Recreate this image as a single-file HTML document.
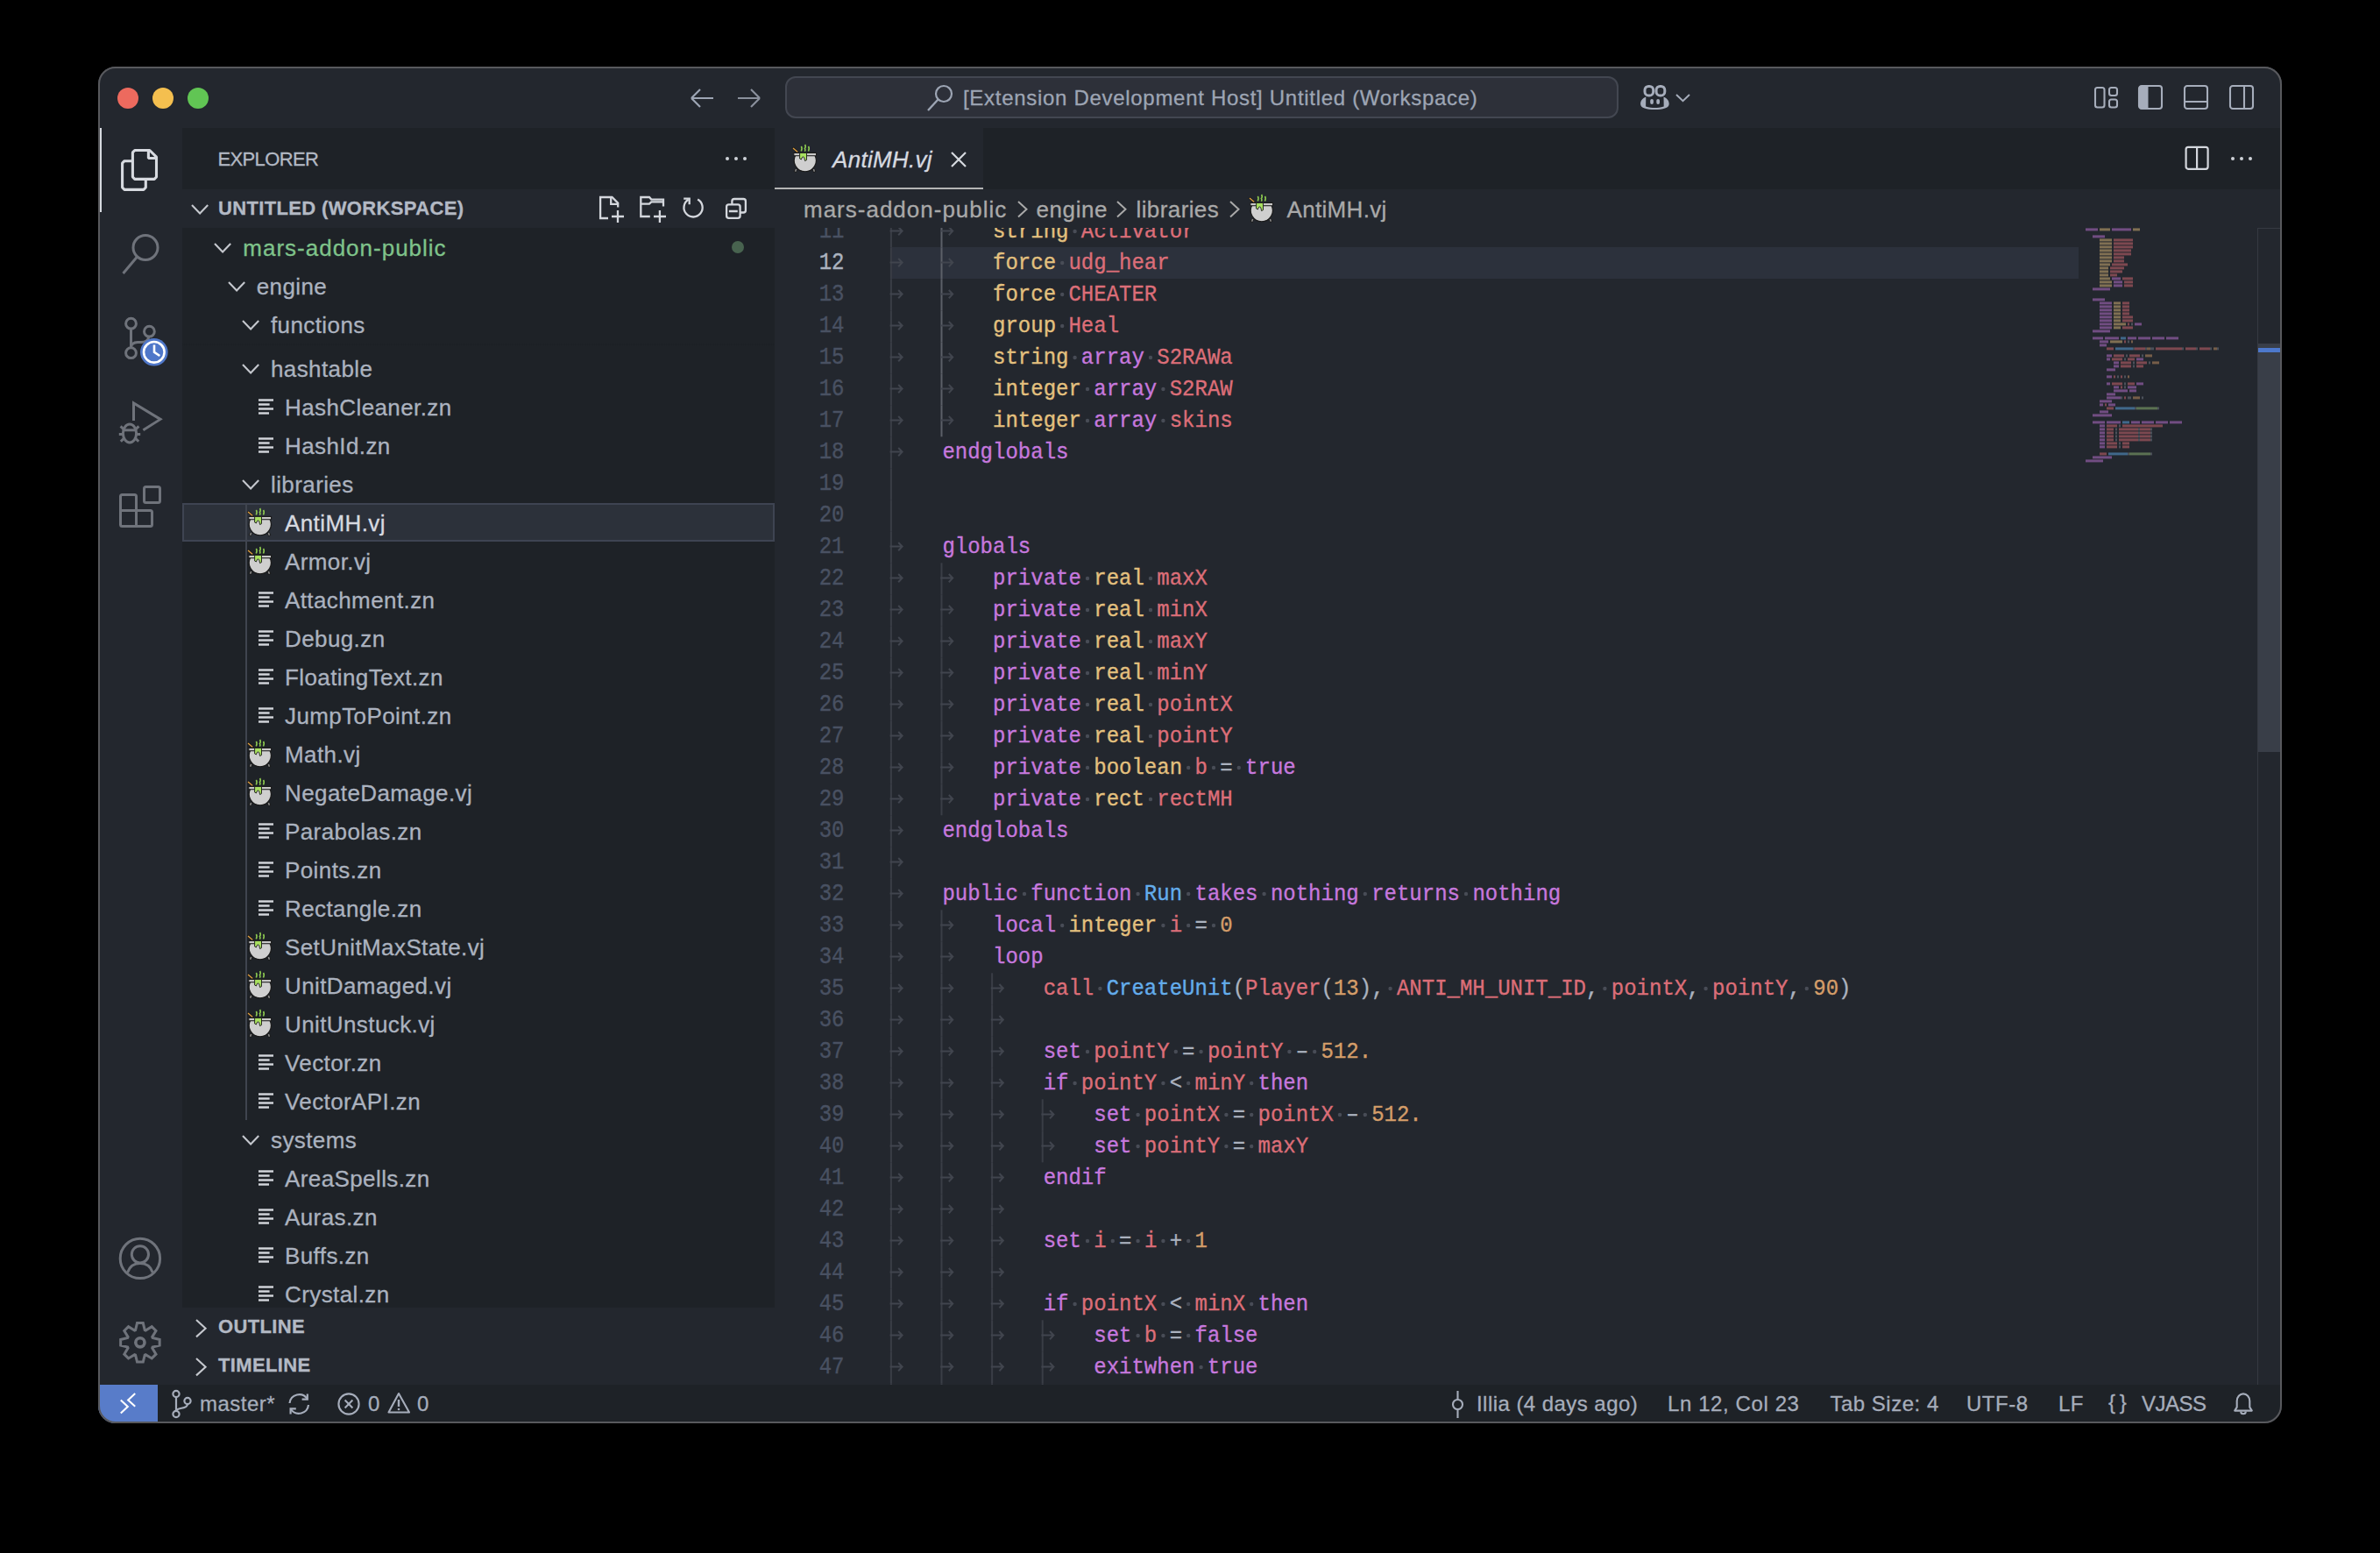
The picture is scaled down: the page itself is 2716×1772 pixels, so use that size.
<!DOCTYPE html><html><head><meta charset="utf-8"><style>
*{margin:0;padding:0;box-sizing:border-box}
html,body{width:2716px;height:1772px;background:#000;overflow:hidden}
body{font-family:"Liberation Sans",sans-serif;color:#abb2bf}
#win{position:absolute;left:112px;top:76px;width:2492px;height:1548px;border-radius:20px;overflow:hidden;background:#23272e}
#winborder{position:absolute;left:112px;top:76px;width:2492px;height:1548px;border-radius:20px;border:2px solid #58595d;pointer-events:none}
.a{position:absolute}
.t{position:absolute;white-space:pre;line-height:1;-webkit-text-stroke:0.3px currentColor}
svg{position:absolute;overflow:visible}
.code{position:absolute;font-family:"Liberation Mono",monospace;font-size:24px;line-height:36px;white-space:pre;-webkit-text-stroke:0.35px currentColor}
.k{color:#c678dd}.y{color:#e3c07e}.r{color:#dc6e78}.b{color:#63adec}.o{color:#d49d69}.p{color:#abb2bf}.g{color:#98c379}
</style></head><body>
<div id="win"><div class="a" style="left:0px;top:0px;width:2492px;height:70px;background:#23272e;"></div><div class="a" style="left:0px;top:70px;width:96px;height:1434px;background:#23272e;"></div><div class="a" style="left:96px;top:70px;width:676px;height:1434px;background:#1e2227;"></div><div class="a" style="left:772px;top:70px;width:1720px;height:1434px;background:#23272e;"></div><div class="a" style="left:772px;top:70px;width:1720px;height:70px;background:#1e2227;"></div><div class="a" style="left:0px;top:1504px;width:2492px;height:44px;background:#1e2227;"></div><div class="a" style="left:22px;top:24px;width:24px;height:24px;border-radius:50%;background:#ed6a5e"></div><div class="a" style="left:62px;top:24px;width:24px;height:24px;border-radius:50%;background:#f4bf4f"></div><div class="a" style="left:102px;top:24px;width:24px;height:24px;border-radius:50%;background:#61c554"></div><svg style="left:674px;top:22px" width="32" height="28" viewBox="0 0 32 28"><path d="M3 14 H28 M3 14 L13 4 M3 14 L13 24" stroke="#9da5b4" stroke-width="2.2" fill="none"/></svg><svg style="left:726px;top:22px" width="32" height="28" viewBox="0 0 32 28"><path d="M29 14 H4 M29 14 L19 4 M29 14 L19 24" stroke="#8a909c" stroke-width="2.2" fill="none"/></svg><div class="a" style="left:784px;top:11px;width:951px;height:48px;border-radius:12px;background:#2d3039;border:2px solid #434751"></div><svg style="left:944px;top:19px" width="34" height="34" viewBox="0 0 34 34"><circle cx="21" cy="12" r="9" stroke="#9da5b4" stroke-width="2.2" fill="none"/><path d="M14.5 18.5 L3 31" stroke="#9da5b4" stroke-width="2.4" fill="none"/></svg><div class="t" style="left:987.00px;top:23.68px;font-size:24px;color:#9da5b4;font-family:'Liberation Sans',sans-serif;letter-spacing:0.7px">[Extension Development Host] Untitled (Workspace)</div><svg style="left:1758px;top:19px" width="40" height="32" viewBox="0 0 40 32"><g fill="none" stroke="#a6adbb" stroke-width="3"><rect x="7" y="3.4" width="9.7" height="10.6" rx="4.3"/><rect x="20.1" y="3.4" width="9.7" height="10.6" rx="4.3"/></g>
<path d="M8.3 15.5 C4 17 2.1 20.5 2.1 23.8 C2.1 28.4 9 30 18.4 30 C27.8 30 34.7 28.4 34.7 23.8 C34.7 20.5 32.8 17 28.5 15.5 L28.7 26.4 C25 27.6 21.5 28.1 18.4 28.1 C15.3 28.1 11.8 27.6 8.1 26.4 Z" fill="#a6adbb"/>
<rect x="13.2" y="17.9" width="3.7" height="6" rx="1.85" fill="#a6adbb"/><rect x="20.3" y="17.9" width="3.7" height="6" rx="1.85" fill="#a6adbb"/></svg><svg style="left:1798px;top:29px" width="20" height="14" viewBox="0 0 20 14"><path d="M3 3 L10.5 10.2 L18 3" stroke="#a6adbb" stroke-width="2" fill="none"/></svg><svg style="left:2276px;top:20px" width="32" height="30" viewBox="0 0 32 30"><g fill="none" stroke="#a6adbb" stroke-width="2.1"><rect x="3" y="4" width="10.5" height="22.5" rx="2.5"/><rect x="19" y="4" width="9" height="9" rx="2.5"/><rect x="19" y="17.5" width="9" height="9" rx="2.5"/></g></svg><svg style="left:2326px;top:19px" width="32" height="32" viewBox="0 0 32 32"><rect x="3" y="3" width="26" height="26" rx="3" fill="none" stroke="#a6adbb" stroke-width="2.1"/><path d="M4 4 H13.5 V28 H4 Z" fill="#a6adbb"/></svg><svg style="left:2378px;top:19px" width="32" height="32" viewBox="0 0 32 32"><g fill="none" stroke="#a6adbb" stroke-width="2.1"><rect x="3" y="3" width="26" height="26" rx="3"/><path d="M3 21 H29"/></g></svg><svg style="left:2430px;top:19px" width="32" height="32" viewBox="0 0 32 32"><g fill="none" stroke="#a6adbb" stroke-width="2.1"><rect x="3" y="3" width="26" height="26" rx="3"/><path d="M19 3 V29"/></g></svg><div class="a" style="left:0px;top:70px;width:4px;height:96px;background:#d7dae0;"></div><svg style="left:18px;top:84px" width="60" height="64" viewBox="0 0 60 64"><g fill="none" stroke="#d7dae0" stroke-width="3.1" stroke-linejoin="bevel">
<path d="M21.4 23.7 H12 L9.6 26.1 V54 L12 56.4 H33.9 L36.3 54 V44.4"/>
<path d="M23.8 11.5 L21.4 13.9 V42 L23.8 44.4 H46.1 L48.5 42 V19.2 L40.8 11.5 Z"/>
<path d="M39.4 11.5 V20.5 H48.5"/></g></svg><svg style="left:18px;top:182px" width="60" height="64" viewBox="0 0 60 64"><g fill="none" stroke="#6f737b" stroke-width="3"><circle cx="36" cy="24.5" r="14"/><path d="M26.5 35 L10.5 54"/></g></svg><svg style="left:18px;top:274px" width="60" height="70" viewBox="0 0 60 70"><g fill="none" stroke="#6f737b" stroke-width="3">
<circle cx="19.5" cy="19.2" r="5.9"/><circle cx="19.5" cy="52.7" r="5.9"/><circle cx="40.4" cy="28.2" r="5.9"/>
<path d="M19.5 25 V46.8"/><path d="M40 34 Q39 40.5 31 40.6 H27 Q20 41 19.5 46"/></g>
<circle cx="45.8" cy="51.8" r="15.8" fill="#4f77c9"/><circle cx="45.8" cy="51.8" r="11.8" fill="none" stroke="#fff" stroke-width="2.6"/>
<path d="M46 43.5 V51.8 L52.3 56" fill="none" stroke="#fff" stroke-width="2.6"/></svg><svg style="left:18px;top:374px" width="60" height="70" viewBox="0 0 60 70"><g fill="none" stroke="#6f737b" stroke-width="3">
<path d="M22.5 30 V10 L53 28.4 L33.4 40.7"/>
<ellipse cx="18" cy="44.5" rx="7.6" ry="10.5"/><path d="M11 40.8 H25"/>
<path d="M7.6 36.4 L11.6 40.3 M28.4 36.4 L24.4 40.3 M5.8 45.5 H10.8 M25.2 45.5 H30.2 M7.8 53.8 L11.8 49.8 M28.2 53.8 L24.2 49.8"/></g></svg><svg style="left:18px;top:469px" width="60" height="70" viewBox="0 0 60 70"><g fill="none" stroke="#6f737b" stroke-width="3" stroke-linejoin="round">
<path d="M7.5 21.5 Q7.5 19.5 9.5 19.5 H23.5 Q25.5 19.5 25.5 21.5 V37.5 H41.5 Q43.5 37.5 43.5 39.5 V53.5 Q43.5 55.5 41.5 55.5 H9.5 Q7.5 55.5 7.5 53.5 Z"/>
<path d="M7.5 37.5 H25.5 V55.5"/>
<path d="M36.5 10.6 H50.5 Q52.5 10.6 52.5 12.6 V26.4 Q52.5 28.4 50.5 28.4 H36.5 Q34.5 28.4 34.5 26.4 V12.6 Q34.5 10.6 36.5 10.6 Z"/></g></svg><svg style="left:18px;top:1329px" width="60" height="64" viewBox="0 0 60 64"><g fill="none" stroke="#6f737b" stroke-width="3"><circle cx="29.9" cy="30.9" r="22.7"/><circle cx="29.9" cy="26.3" r="9.6"/>
<path d="M15.5 47 Q19 36.5 29.9 36.5 Q40.8 36.5 44.3 47"/></g></svg><svg style="left:18px;top:1426px" width="60" height="60" viewBox="0 0 60 60"><polygon points="24.58,15.56 26.54,7.55 33.26,7.55 35.22,15.56 36.20,15.97 43.25,11.69 48.01,16.45 43.73,23.50 44.14,24.48 52.15,26.44 52.15,33.16 44.14,35.12 43.73,36.10 48.01,43.15 43.25,47.91 36.20,43.63 35.22,44.04 33.26,52.05 26.54,52.05 24.58,44.04 23.60,43.63 16.55,47.91 11.79,43.15 16.07,36.10 15.66,35.12 7.65,33.16 7.65,26.44 15.66,24.48 16.07,23.50 11.79,16.45 16.55,11.69 23.60,15.97" fill="none" stroke="#6f737b" stroke-width="3" stroke-linejoin="miter"/><circle cx="29.9" cy="29.8" r="5.1" fill="none" stroke="#6f737b" stroke-width="3.6"/></svg><div class="t" style="left:136.40px;top:95.38px;font-size:22px;color:#b3b9c4;font-family:'Liberation Sans',sans-serif;letter-spacing:-0.6px">EXPLORER</div><div class="a" style="left:715.6px;top:102.69999999999999px;width:4.6px;height:4.6px;border-radius:50%;background:#cfd2d8"></div><div class="a" style="left:725.6px;top:102.69999999999999px;width:4.6px;height:4.6px;border-radius:50%;background:#cfd2d8"></div><div class="a" style="left:735.6px;top:102.69999999999999px;width:4.6px;height:4.6px;border-radius:50%;background:#cfd2d8"></div><div class="a" style="left:96px;top:140px;width:676px;height:44px;background:#23272e;"></div><svg style="left:104.9px;top:155.8px" width="22.2" height="13.4" viewBox="0 0 22.2 13.4"><path d="M2 2 L11.10 11.40 L20.20 2" fill="none" stroke="#c5c8ce" stroke-width="2.1"/></svg><div class="t" style="left:137.00px;top:151.38px;font-size:22px;color:#b3b9c4;font-family:'Liberation Sans',sans-serif;font-weight:bold;letter-spacing:0.35px">UNTITLED (WORKSPACE)</div><svg style="left:558px;top:139px" width="200" height="45" viewBox="0 0 200 45"><g fill="none" stroke="#d4d7dd" stroke-width="2.3">
<path d="M24 34 H15.1 V10 H28.5 L35.2 16.7 V21.6"/><path d="M27.2 10 V17.8 H35.2"/><path d="M28 32 H42 M35 25 V39"/>
<path d="M71.8 32 H61.3 V10 H71 L73.3 12.6 H87 V20.6"/><path d="M61.3 17.6 H71 L73.3 15.4 H87"/><path d="M76 32 H90 M82.9 25 V39"/>
<path d="M126.2 12.6 A10.6 10.6 0 1 1 115.6 12.8"/><path d="M110.2 11.7 H116.7 V18.3"/>
<rect x="165.4" y="12" width="15.5" height="15.5" rx="2.6"/><rect x="159.1" y="18.3" width="15.5" height="15.5" rx="2.6" fill="#23272e"/><path d="M161.9 26 H171.8"/>
</g></svg><div class="a" style="left:96px;top:497.70000000000005px;width:676px;height:44px;background:#2c313a;border:2px solid #3e4452"></div><div class="a" style="left:167.5px;top:497.70000000000005px;width:2.5px;height:704.0px;background:#40454f;"></div><svg style="left:163.0px;top:337.8px" width="22.2" height="13.4" viewBox="0 0 22.2 13.4"><path d="M2 2 L11.10 11.40 L20.20 2" fill="none" stroke="#c5c8ce" stroke-width="2.1"/></svg><div class="t" style="left:197.00px;top:331.89px;font-size:26px;color:#abb2bf;font-family:'Liberation Sans',sans-serif;letter-spacing:0.4px">hashtable</div><svg style="left:183px;top:365.7px" width="18" height="44" viewBox="0 0 18 44"><rect x="0" y="13.3" width="17" height="2.4" fill="#d4d7dd"/><rect x="0" y="18.3" width="12.6" height="2.4" fill="#d4d7dd"/><rect x="0" y="23.3" width="17" height="2.4" fill="#d4d7dd"/><rect x="0" y="28.3" width="12" height="2.4" fill="#d4d7dd"/></svg><div class="t" style="left:213.00px;top:375.89px;font-size:26px;color:#abb2bf;font-family:'Liberation Sans',sans-serif;letter-spacing:0.4px">HashCleaner.zn</div><svg style="left:183px;top:409.7px" width="18" height="44" viewBox="0 0 18 44"><rect x="0" y="13.3" width="17" height="2.4" fill="#d4d7dd"/><rect x="0" y="18.3" width="12.6" height="2.4" fill="#d4d7dd"/><rect x="0" y="23.3" width="17" height="2.4" fill="#d4d7dd"/><rect x="0" y="28.3" width="12" height="2.4" fill="#d4d7dd"/></svg><div class="t" style="left:213.00px;top:419.89px;font-size:26px;color:#abb2bf;font-family:'Liberation Sans',sans-serif;letter-spacing:0.4px">HashId.zn</div><svg style="left:163.0px;top:469.80000000000007px" width="22.2" height="13.4" viewBox="0 0 22.2 13.4"><path d="M2 2 L11.10 11.40 L20.20 2" fill="none" stroke="#c5c8ce" stroke-width="2.1"/></svg><div class="t" style="left:197.00px;top:463.89px;font-size:26px;color:#abb2bf;font-family:'Liberation Sans',sans-serif;letter-spacing:0.4px">libraries</div><svg style="left:166px;top:497.70000000000005px" width="40" height="44" viewBox="0 0 40 44">
<path d="M4.6 9.6 L10.8 15" stroke="#1b1b1b" stroke-width="2.6"/><path d="M5 10 L10.3 14.5" stroke="#e0a040" stroke-width="1.4"/>
<path d="M8.6 34 L7.2 37.4 M28.4 34 L29.8 37.4" stroke="#1b1b1b" stroke-width="3.2"/>
<path d="M8.6 34 L7.6 36.8 M28.4 34 L29.4 36.8" stroke="#8a8a8a" stroke-width="1.6"/>
<path d="M7.7 18.2 H29.9 A12.6 12.6 0 1 1 7.7 18.2 Z" fill="#cfcfcf" stroke="#1b1b1b" stroke-width="1.2"/>
<rect x="5.8" y="15.4" width="25.8" height="3.4" rx="0.8" fill="#c8c8c8" stroke="#1b1b1b" stroke-width="1.1"/>
<path d="M12.6 15.4 H20.5 V23.6 L18.6 24.6 L17.8 21 C17.2 19.6 15.6 19.6 15.2 21 L14.4 23 L12.6 22 Z" fill="#a8e060" stroke="#1b1b1b" stroke-width="0.9"/>
<g stroke="#8cc850" stroke-width="1.6" fill="none"><path d="M14.3 8 Q15.8 10 14.3 13.5"/><path d="M18.6 6 Q20 8.5 18.4 10.5 Q19.6 12 18.4 13.8"/><path d="M22.5 8 Q24 10 22.5 13.5"/></g>
</svg><div class="t" style="left:213.00px;top:507.89px;font-size:26px;color:#d7dae0;font-family:'Liberation Sans',sans-serif;letter-spacing:0.4px">AntiMH.vj</div><svg style="left:166px;top:541.7px" width="40" height="44" viewBox="0 0 40 44">
<path d="M4.6 9.6 L10.8 15" stroke="#1b1b1b" stroke-width="2.6"/><path d="M5 10 L10.3 14.5" stroke="#e0a040" stroke-width="1.4"/>
<path d="M8.6 34 L7.2 37.4 M28.4 34 L29.8 37.4" stroke="#1b1b1b" stroke-width="3.2"/>
<path d="M8.6 34 L7.6 36.8 M28.4 34 L29.4 36.8" stroke="#8a8a8a" stroke-width="1.6"/>
<path d="M7.7 18.2 H29.9 A12.6 12.6 0 1 1 7.7 18.2 Z" fill="#cfcfcf" stroke="#1b1b1b" stroke-width="1.2"/>
<rect x="5.8" y="15.4" width="25.8" height="3.4" rx="0.8" fill="#c8c8c8" stroke="#1b1b1b" stroke-width="1.1"/>
<path d="M12.6 15.4 H20.5 V23.6 L18.6 24.6 L17.8 21 C17.2 19.6 15.6 19.6 15.2 21 L14.4 23 L12.6 22 Z" fill="#a8e060" stroke="#1b1b1b" stroke-width="0.9"/>
<g stroke="#8cc850" stroke-width="1.6" fill="none"><path d="M14.3 8 Q15.8 10 14.3 13.5"/><path d="M18.6 6 Q20 8.5 18.4 10.5 Q19.6 12 18.4 13.8"/><path d="M22.5 8 Q24 10 22.5 13.5"/></g>
</svg><div class="t" style="left:213.00px;top:551.89px;font-size:26px;color:#abb2bf;font-family:'Liberation Sans',sans-serif;letter-spacing:0.4px">Armor.vj</div><svg style="left:183px;top:585.7px" width="18" height="44" viewBox="0 0 18 44"><rect x="0" y="13.3" width="17" height="2.4" fill="#d4d7dd"/><rect x="0" y="18.3" width="12.6" height="2.4" fill="#d4d7dd"/><rect x="0" y="23.3" width="17" height="2.4" fill="#d4d7dd"/><rect x="0" y="28.3" width="12" height="2.4" fill="#d4d7dd"/></svg><div class="t" style="left:213.00px;top:595.89px;font-size:26px;color:#abb2bf;font-family:'Liberation Sans',sans-serif;letter-spacing:0.4px">Attachment.zn</div><svg style="left:183px;top:629.7px" width="18" height="44" viewBox="0 0 18 44"><rect x="0" y="13.3" width="17" height="2.4" fill="#d4d7dd"/><rect x="0" y="18.3" width="12.6" height="2.4" fill="#d4d7dd"/><rect x="0" y="23.3" width="17" height="2.4" fill="#d4d7dd"/><rect x="0" y="28.3" width="12" height="2.4" fill="#d4d7dd"/></svg><div class="t" style="left:213.00px;top:639.89px;font-size:26px;color:#abb2bf;font-family:'Liberation Sans',sans-serif;letter-spacing:0.4px">Debug.zn</div><svg style="left:183px;top:673.7px" width="18" height="44" viewBox="0 0 18 44"><rect x="0" y="13.3" width="17" height="2.4" fill="#d4d7dd"/><rect x="0" y="18.3" width="12.6" height="2.4" fill="#d4d7dd"/><rect x="0" y="23.3" width="17" height="2.4" fill="#d4d7dd"/><rect x="0" y="28.3" width="12" height="2.4" fill="#d4d7dd"/></svg><div class="t" style="left:213.00px;top:683.89px;font-size:26px;color:#abb2bf;font-family:'Liberation Sans',sans-serif;letter-spacing:0.4px">FloatingText.zn</div><svg style="left:183px;top:717.7px" width="18" height="44" viewBox="0 0 18 44"><rect x="0" y="13.3" width="17" height="2.4" fill="#d4d7dd"/><rect x="0" y="18.3" width="12.6" height="2.4" fill="#d4d7dd"/><rect x="0" y="23.3" width="17" height="2.4" fill="#d4d7dd"/><rect x="0" y="28.3" width="12" height="2.4" fill="#d4d7dd"/></svg><div class="t" style="left:213.00px;top:727.89px;font-size:26px;color:#abb2bf;font-family:'Liberation Sans',sans-serif;letter-spacing:0.4px">JumpToPoint.zn</div><svg style="left:166px;top:761.7px" width="40" height="44" viewBox="0 0 40 44">
<path d="M4.6 9.6 L10.8 15" stroke="#1b1b1b" stroke-width="2.6"/><path d="M5 10 L10.3 14.5" stroke="#e0a040" stroke-width="1.4"/>
<path d="M8.6 34 L7.2 37.4 M28.4 34 L29.8 37.4" stroke="#1b1b1b" stroke-width="3.2"/>
<path d="M8.6 34 L7.6 36.8 M28.4 34 L29.4 36.8" stroke="#8a8a8a" stroke-width="1.6"/>
<path d="M7.7 18.2 H29.9 A12.6 12.6 0 1 1 7.7 18.2 Z" fill="#cfcfcf" stroke="#1b1b1b" stroke-width="1.2"/>
<rect x="5.8" y="15.4" width="25.8" height="3.4" rx="0.8" fill="#c8c8c8" stroke="#1b1b1b" stroke-width="1.1"/>
<path d="M12.6 15.4 H20.5 V23.6 L18.6 24.6 L17.8 21 C17.2 19.6 15.6 19.6 15.2 21 L14.4 23 L12.6 22 Z" fill="#a8e060" stroke="#1b1b1b" stroke-width="0.9"/>
<g stroke="#8cc850" stroke-width="1.6" fill="none"><path d="M14.3 8 Q15.8 10 14.3 13.5"/><path d="M18.6 6 Q20 8.5 18.4 10.5 Q19.6 12 18.4 13.8"/><path d="M22.5 8 Q24 10 22.5 13.5"/></g>
</svg><div class="t" style="left:213.00px;top:771.89px;font-size:26px;color:#abb2bf;font-family:'Liberation Sans',sans-serif;letter-spacing:0.4px">Math.vj</div><svg style="left:166px;top:805.7px" width="40" height="44" viewBox="0 0 40 44">
<path d="M4.6 9.6 L10.8 15" stroke="#1b1b1b" stroke-width="2.6"/><path d="M5 10 L10.3 14.5" stroke="#e0a040" stroke-width="1.4"/>
<path d="M8.6 34 L7.2 37.4 M28.4 34 L29.8 37.4" stroke="#1b1b1b" stroke-width="3.2"/>
<path d="M8.6 34 L7.6 36.8 M28.4 34 L29.4 36.8" stroke="#8a8a8a" stroke-width="1.6"/>
<path d="M7.7 18.2 H29.9 A12.6 12.6 0 1 1 7.7 18.2 Z" fill="#cfcfcf" stroke="#1b1b1b" stroke-width="1.2"/>
<rect x="5.8" y="15.4" width="25.8" height="3.4" rx="0.8" fill="#c8c8c8" stroke="#1b1b1b" stroke-width="1.1"/>
<path d="M12.6 15.4 H20.5 V23.6 L18.6 24.6 L17.8 21 C17.2 19.6 15.6 19.6 15.2 21 L14.4 23 L12.6 22 Z" fill="#a8e060" stroke="#1b1b1b" stroke-width="0.9"/>
<g stroke="#8cc850" stroke-width="1.6" fill="none"><path d="M14.3 8 Q15.8 10 14.3 13.5"/><path d="M18.6 6 Q20 8.5 18.4 10.5 Q19.6 12 18.4 13.8"/><path d="M22.5 8 Q24 10 22.5 13.5"/></g>
</svg><div class="t" style="left:213.00px;top:815.89px;font-size:26px;color:#abb2bf;font-family:'Liberation Sans',sans-serif;letter-spacing:0.4px">NegateDamage.vj</div><svg style="left:183px;top:849.7px" width="18" height="44" viewBox="0 0 18 44"><rect x="0" y="13.3" width="17" height="2.4" fill="#d4d7dd"/><rect x="0" y="18.3" width="12.6" height="2.4" fill="#d4d7dd"/><rect x="0" y="23.3" width="17" height="2.4" fill="#d4d7dd"/><rect x="0" y="28.3" width="12" height="2.4" fill="#d4d7dd"/></svg><div class="t" style="left:213.00px;top:859.89px;font-size:26px;color:#abb2bf;font-family:'Liberation Sans',sans-serif;letter-spacing:0.4px">Parabolas.zn</div><svg style="left:183px;top:893.7px" width="18" height="44" viewBox="0 0 18 44"><rect x="0" y="13.3" width="17" height="2.4" fill="#d4d7dd"/><rect x="0" y="18.3" width="12.6" height="2.4" fill="#d4d7dd"/><rect x="0" y="23.3" width="17" height="2.4" fill="#d4d7dd"/><rect x="0" y="28.3" width="12" height="2.4" fill="#d4d7dd"/></svg><div class="t" style="left:213.00px;top:903.89px;font-size:26px;color:#abb2bf;font-family:'Liberation Sans',sans-serif;letter-spacing:0.4px">Points.zn</div><svg style="left:183px;top:937.7px" width="18" height="44" viewBox="0 0 18 44"><rect x="0" y="13.3" width="17" height="2.4" fill="#d4d7dd"/><rect x="0" y="18.3" width="12.6" height="2.4" fill="#d4d7dd"/><rect x="0" y="23.3" width="17" height="2.4" fill="#d4d7dd"/><rect x="0" y="28.3" width="12" height="2.4" fill="#d4d7dd"/></svg><div class="t" style="left:213.00px;top:947.89px;font-size:26px;color:#abb2bf;font-family:'Liberation Sans',sans-serif;letter-spacing:0.4px">Rectangle.zn</div><svg style="left:166px;top:981.7px" width="40" height="44" viewBox="0 0 40 44">
<path d="M4.6 9.6 L10.8 15" stroke="#1b1b1b" stroke-width="2.6"/><path d="M5 10 L10.3 14.5" stroke="#e0a040" stroke-width="1.4"/>
<path d="M8.6 34 L7.2 37.4 M28.4 34 L29.8 37.4" stroke="#1b1b1b" stroke-width="3.2"/>
<path d="M8.6 34 L7.6 36.8 M28.4 34 L29.4 36.8" stroke="#8a8a8a" stroke-width="1.6"/>
<path d="M7.7 18.2 H29.9 A12.6 12.6 0 1 1 7.7 18.2 Z" fill="#cfcfcf" stroke="#1b1b1b" stroke-width="1.2"/>
<rect x="5.8" y="15.4" width="25.8" height="3.4" rx="0.8" fill="#c8c8c8" stroke="#1b1b1b" stroke-width="1.1"/>
<path d="M12.6 15.4 H20.5 V23.6 L18.6 24.6 L17.8 21 C17.2 19.6 15.6 19.6 15.2 21 L14.4 23 L12.6 22 Z" fill="#a8e060" stroke="#1b1b1b" stroke-width="0.9"/>
<g stroke="#8cc850" stroke-width="1.6" fill="none"><path d="M14.3 8 Q15.8 10 14.3 13.5"/><path d="M18.6 6 Q20 8.5 18.4 10.5 Q19.6 12 18.4 13.8"/><path d="M22.5 8 Q24 10 22.5 13.5"/></g>
</svg><div class="t" style="left:213.00px;top:991.89px;font-size:26px;color:#abb2bf;font-family:'Liberation Sans',sans-serif;letter-spacing:0.4px">SetUnitMaxState.vj</div><svg style="left:166px;top:1025.7px" width="40" height="44" viewBox="0 0 40 44">
<path d="M4.6 9.6 L10.8 15" stroke="#1b1b1b" stroke-width="2.6"/><path d="M5 10 L10.3 14.5" stroke="#e0a040" stroke-width="1.4"/>
<path d="M8.6 34 L7.2 37.4 M28.4 34 L29.8 37.4" stroke="#1b1b1b" stroke-width="3.2"/>
<path d="M8.6 34 L7.6 36.8 M28.4 34 L29.4 36.8" stroke="#8a8a8a" stroke-width="1.6"/>
<path d="M7.7 18.2 H29.9 A12.6 12.6 0 1 1 7.7 18.2 Z" fill="#cfcfcf" stroke="#1b1b1b" stroke-width="1.2"/>
<rect x="5.8" y="15.4" width="25.8" height="3.4" rx="0.8" fill="#c8c8c8" stroke="#1b1b1b" stroke-width="1.1"/>
<path d="M12.6 15.4 H20.5 V23.6 L18.6 24.6 L17.8 21 C17.2 19.6 15.6 19.6 15.2 21 L14.4 23 L12.6 22 Z" fill="#a8e060" stroke="#1b1b1b" stroke-width="0.9"/>
<g stroke="#8cc850" stroke-width="1.6" fill="none"><path d="M14.3 8 Q15.8 10 14.3 13.5"/><path d="M18.6 6 Q20 8.5 18.4 10.5 Q19.6 12 18.4 13.8"/><path d="M22.5 8 Q24 10 22.5 13.5"/></g>
</svg><div class="t" style="left:213.00px;top:1035.89px;font-size:26px;color:#abb2bf;font-family:'Liberation Sans',sans-serif;letter-spacing:0.4px">UnitDamaged.vj</div><svg style="left:166px;top:1069.7px" width="40" height="44" viewBox="0 0 40 44">
<path d="M4.6 9.6 L10.8 15" stroke="#1b1b1b" stroke-width="2.6"/><path d="M5 10 L10.3 14.5" stroke="#e0a040" stroke-width="1.4"/>
<path d="M8.6 34 L7.2 37.4 M28.4 34 L29.8 37.4" stroke="#1b1b1b" stroke-width="3.2"/>
<path d="M8.6 34 L7.6 36.8 M28.4 34 L29.4 36.8" stroke="#8a8a8a" stroke-width="1.6"/>
<path d="M7.7 18.2 H29.9 A12.6 12.6 0 1 1 7.7 18.2 Z" fill="#cfcfcf" stroke="#1b1b1b" stroke-width="1.2"/>
<rect x="5.8" y="15.4" width="25.8" height="3.4" rx="0.8" fill="#c8c8c8" stroke="#1b1b1b" stroke-width="1.1"/>
<path d="M12.6 15.4 H20.5 V23.6 L18.6 24.6 L17.8 21 C17.2 19.6 15.6 19.6 15.2 21 L14.4 23 L12.6 22 Z" fill="#a8e060" stroke="#1b1b1b" stroke-width="0.9"/>
<g stroke="#8cc850" stroke-width="1.6" fill="none"><path d="M14.3 8 Q15.8 10 14.3 13.5"/><path d="M18.6 6 Q20 8.5 18.4 10.5 Q19.6 12 18.4 13.8"/><path d="M22.5 8 Q24 10 22.5 13.5"/></g>
</svg><div class="t" style="left:213.00px;top:1079.89px;font-size:26px;color:#abb2bf;font-family:'Liberation Sans',sans-serif;letter-spacing:0.4px">UnitUnstuck.vj</div><svg style="left:183px;top:1113.7px" width="18" height="44" viewBox="0 0 18 44"><rect x="0" y="13.3" width="17" height="2.4" fill="#d4d7dd"/><rect x="0" y="18.3" width="12.6" height="2.4" fill="#d4d7dd"/><rect x="0" y="23.3" width="17" height="2.4" fill="#d4d7dd"/><rect x="0" y="28.3" width="12" height="2.4" fill="#d4d7dd"/></svg><div class="t" style="left:213.00px;top:1123.89px;font-size:26px;color:#abb2bf;font-family:'Liberation Sans',sans-serif;letter-spacing:0.4px">Vector.zn</div><svg style="left:183px;top:1157.7px" width="18" height="44" viewBox="0 0 18 44"><rect x="0" y="13.3" width="17" height="2.4" fill="#d4d7dd"/><rect x="0" y="18.3" width="12.6" height="2.4" fill="#d4d7dd"/><rect x="0" y="23.3" width="17" height="2.4" fill="#d4d7dd"/><rect x="0" y="28.3" width="12" height="2.4" fill="#d4d7dd"/></svg><div class="t" style="left:213.00px;top:1167.89px;font-size:26px;color:#abb2bf;font-family:'Liberation Sans',sans-serif;letter-spacing:0.4px">VectorAPI.zn</div><svg style="left:163.0px;top:1217.8px" width="22.2" height="13.4" viewBox="0 0 22.2 13.4"><path d="M2 2 L11.10 11.40 L20.20 2" fill="none" stroke="#c5c8ce" stroke-width="2.1"/></svg><div class="t" style="left:197.00px;top:1211.89px;font-size:26px;color:#abb2bf;font-family:'Liberation Sans',sans-serif;letter-spacing:0.4px">systems</div><svg style="left:183px;top:1245.7px" width="18" height="44" viewBox="0 0 18 44"><rect x="0" y="13.3" width="17" height="2.4" fill="#d4d7dd"/><rect x="0" y="18.3" width="12.6" height="2.4" fill="#d4d7dd"/><rect x="0" y="23.3" width="17" height="2.4" fill="#d4d7dd"/><rect x="0" y="28.3" width="12" height="2.4" fill="#d4d7dd"/></svg><div class="t" style="left:213.00px;top:1255.89px;font-size:26px;color:#abb2bf;font-family:'Liberation Sans',sans-serif;letter-spacing:0.4px">AreaSpells.zn</div><svg style="left:183px;top:1289.7px" width="18" height="44" viewBox="0 0 18 44"><rect x="0" y="13.3" width="17" height="2.4" fill="#d4d7dd"/><rect x="0" y="18.3" width="12.6" height="2.4" fill="#d4d7dd"/><rect x="0" y="23.3" width="17" height="2.4" fill="#d4d7dd"/><rect x="0" y="28.3" width="12" height="2.4" fill="#d4d7dd"/></svg><div class="t" style="left:213.00px;top:1299.89px;font-size:26px;color:#abb2bf;font-family:'Liberation Sans',sans-serif;letter-spacing:0.4px">Auras.zn</div><svg style="left:183px;top:1333.7px" width="18" height="44" viewBox="0 0 18 44"><rect x="0" y="13.3" width="17" height="2.4" fill="#d4d7dd"/><rect x="0" y="18.3" width="12.6" height="2.4" fill="#d4d7dd"/><rect x="0" y="23.3" width="17" height="2.4" fill="#d4d7dd"/><rect x="0" y="28.3" width="12" height="2.4" fill="#d4d7dd"/></svg><div class="t" style="left:213.00px;top:1343.89px;font-size:26px;color:#abb2bf;font-family:'Liberation Sans',sans-serif;letter-spacing:0.4px">Buffs.zn</div><svg style="left:183px;top:1377.7px" width="18" height="44" viewBox="0 0 18 44"><rect x="0" y="13.3" width="17" height="2.4" fill="#d4d7dd"/><rect x="0" y="18.3" width="12.6" height="2.4" fill="#d4d7dd"/><rect x="0" y="23.3" width="17" height="2.4" fill="#d4d7dd"/><rect x="0" y="28.3" width="12" height="2.4" fill="#d4d7dd"/></svg><div class="t" style="left:213.00px;top:1387.89px;font-size:26px;color:#abb2bf;font-family:'Liberation Sans',sans-serif;letter-spacing:0.4px">Crystal.zn</div><div class="a" style="left:96px;top:184px;width:676px;height:132px;background:#1e2227;"></div><div class="a" style="left:96px;top:316px;width:676px;height:4px;background:linear-gradient(#1c2025,#1e2227);"></div><svg style="left:131.0px;top:200.10000000000002px" width="22.2" height="13.4" viewBox="0 0 22.2 13.4"><path d="M2 2 L11.10 11.40 L20.20 2" fill="none" stroke="#c5c8ce" stroke-width="2.1"/></svg><div class="t" style="left:165.30px;top:194.19px;font-size:26px;color:#7fc38a;font-family:'Liberation Sans',sans-serif;letter-spacing:1.0px">mars-addon-public</div><svg style="left:147.0px;top:244.10000000000002px" width="22.2" height="13.4" viewBox="0 0 22.2 13.4"><path d="M2 2 L11.10 11.40 L20.20 2" fill="none" stroke="#c5c8ce" stroke-width="2.1"/></svg><div class="t" style="left:180.70px;top:238.19px;font-size:26px;color:#abb2bf;font-family:'Liberation Sans',sans-serif;letter-spacing:0.4px">engine</div><svg style="left:163.0px;top:288.1px" width="22.2" height="13.4" viewBox="0 0 22.2 13.4"><path d="M2 2 L11.10 11.40 L20.20 2" fill="none" stroke="#c5c8ce" stroke-width="2.1"/></svg><div class="t" style="left:197.00px;top:282.19px;font-size:26px;color:#abb2bf;font-family:'Liberation Sans',sans-serif;letter-spacing:0.4px">functions</div><div class="a" style="left:722.9px;top:198.89999999999998px;width:14px;height:14px;border-radius:50%;background:#48634f"></div><div class="a" style="left:96px;top:1416px;width:676px;height:88px;background:#23272e;"></div><svg style="left:110.19999999999999px;top:1427.5px" width="14.6" height="23.4" viewBox="0 0 14.6 23.4"><path d="M2 2 L12.60 11.70 L2 21.40" fill="none" stroke="#c5c8ce" stroke-width="2.1"/></svg><div class="t" style="left:137.00px;top:1427.38px;font-size:22px;color:#b3b9c4;font-family:'Liberation Sans',sans-serif;font-weight:bold;letter-spacing:0.35px">OUTLINE</div><svg style="left:110.19999999999999px;top:1471.5px" width="14.6" height="23.4" viewBox="0 0 14.6 23.4"><path d="M2 2 L12.60 11.70 L2 21.40" fill="none" stroke="#c5c8ce" stroke-width="2.1"/></svg><div class="t" style="left:137.00px;top:1471.38px;font-size:22px;color:#b3b9c4;font-family:'Liberation Sans',sans-serif;font-weight:bold;letter-spacing:0.35px">TIMELINE</div><div class="a" style="left:772px;top:70px;width:238px;height:70px;background:#23272e;"></div><div class="a" style="left:772px;top:138px;width:238px;height:2px;background:#b4b4b4;"></div><svg style="left:788px;top:83px" width="40" height="44" viewBox="0 0 40 44">
<path d="M4.6 9.6 L10.8 15" stroke="#1b1b1b" stroke-width="2.6"/><path d="M5 10 L10.3 14.5" stroke="#e0a040" stroke-width="1.4"/>
<path d="M8.6 34 L7.2 37.4 M28.4 34 L29.8 37.4" stroke="#1b1b1b" stroke-width="3.2"/>
<path d="M8.6 34 L7.6 36.8 M28.4 34 L29.4 36.8" stroke="#8a8a8a" stroke-width="1.6"/>
<path d="M7.7 18.2 H29.9 A12.6 12.6 0 1 1 7.7 18.2 Z" fill="#cfcfcf" stroke="#1b1b1b" stroke-width="1.2"/>
<rect x="5.8" y="15.4" width="25.8" height="3.4" rx="0.8" fill="#c8c8c8" stroke="#1b1b1b" stroke-width="1.1"/>
<path d="M12.6 15.4 H20.5 V23.6 L18.6 24.6 L17.8 21 C17.2 19.6 15.6 19.6 15.2 21 L14.4 23 L12.6 22 Z" fill="#a8e060" stroke="#1b1b1b" stroke-width="0.9"/>
<g stroke="#8cc850" stroke-width="1.6" fill="none"><path d="M14.3 8 Q15.8 10 14.3 13.5"/><path d="M18.6 6 Q20 8.5 18.4 10.5 Q19.6 12 18.4 13.8"/><path d="M22.5 8 Q24 10 22.5 13.5"/></g>
</svg><div class="t" style="left:838.00px;top:92.69px;font-size:26px;color:#d7dae0;font-family:'Liberation Sans',sans-serif;font-style:italic;letter-spacing:0.3px">AntiMH.vj</div><svg style="left:971px;top:95px" width="22" height="22" viewBox="0 0 22 22"><path d="M3 3 L19 19 M19 3 L3 19" stroke="#d7dae0" stroke-width="2.2"/></svg><svg style="left:2378px;top:88px" width="34" height="32" viewBox="0 0 34 32"><g fill="none" stroke="#d4d7dd" stroke-width="2.2"><rect x="4.6" y="3.8" width="25" height="25" rx="2.5"/><path d="M17.1 3.8 V28.8"/></g></svg><div class="a" style="left:2433.6px;top:102.69999999999999px;width:4.6px;height:4.6px;border-radius:50%;background:#cfd2d8"></div><div class="a" style="left:2443.6px;top:102.69999999999999px;width:4.6px;height:4.6px;border-radius:50%;background:#cfd2d8"></div><div class="a" style="left:2453.6px;top:102.69999999999999px;width:4.6px;height:4.6px;border-radius:50%;background:#cfd2d8"></div><div class="t" style="left:805.00px;top:149.79px;font-size:26px;color:#a9a9a9;font-family:'Liberation Sans',sans-serif;letter-spacing:1.0px">mars-addon-public</div><svg style="left:1046.7px;top:150.5px" width="16" height="24" viewBox="0 0 16 24"><path d="M3 3 L12.5 11.8 L3 20.6" fill="none" stroke="#a9a9a9" stroke-width="2"/></svg><div class="t" style="left:1070.50px;top:149.79px;font-size:26px;color:#a9a9a9;font-family:'Liberation Sans',sans-serif;letter-spacing:0.6px">engine</div><svg style="left:1160px;top:150.5px" width="16" height="24" viewBox="0 0 16 24"><path d="M3 3 L12.5 11.8 L3 20.6" fill="none" stroke="#a9a9a9" stroke-width="2"/></svg><div class="t" style="left:1184.50px;top:149.79px;font-size:26px;color:#a9a9a9;font-family:'Liberation Sans',sans-serif;letter-spacing:0.4px">libraries</div><svg style="left:1289px;top:150.5px" width="16" height="24" viewBox="0 0 16 24"><path d="M3 3 L12.5 11.8 L3 20.6" fill="none" stroke="#a9a9a9" stroke-width="2"/></svg><svg style="left:1309px;top:140px" width="40" height="44" viewBox="0 0 40 44">
<path d="M4.6 9.6 L10.8 15" stroke="#1b1b1b" stroke-width="2.6"/><path d="M5 10 L10.3 14.5" stroke="#e0a040" stroke-width="1.4"/>
<path d="M8.6 34 L7.2 37.4 M28.4 34 L29.8 37.4" stroke="#1b1b1b" stroke-width="3.2"/>
<path d="M8.6 34 L7.6 36.8 M28.4 34 L29.4 36.8" stroke="#8a8a8a" stroke-width="1.6"/>
<path d="M7.7 18.2 H29.9 A12.6 12.6 0 1 1 7.7 18.2 Z" fill="#cfcfcf" stroke="#1b1b1b" stroke-width="1.2"/>
<rect x="5.8" y="15.4" width="25.8" height="3.4" rx="0.8" fill="#c8c8c8" stroke="#1b1b1b" stroke-width="1.1"/>
<path d="M12.6 15.4 H20.5 V23.6 L18.6 24.6 L17.8 21 C17.2 19.6 15.6 19.6 15.2 21 L14.4 23 L12.6 22 Z" fill="#a8e060" stroke="#1b1b1b" stroke-width="0.9"/>
<g stroke="#8cc850" stroke-width="1.6" fill="none"><path d="M14.3 8 Q15.8 10 14.3 13.5"/><path d="M18.6 6 Q20 8.5 18.4 10.5 Q19.6 12 18.4 13.8"/><path d="M22.5 8 Q24 10 22.5 13.5"/></g>
</svg><div class="t" style="left:1356.60px;top:149.79px;font-size:26px;color:#a9a9a9;font-family:'Liberation Sans',sans-serif;letter-spacing:0.3px">AntiMH.vj</div><div class="a" style="left:772px;top:184px;width:1488px;height:1320px;overflow:hidden"><div class="a" style="left:134px;top:22.30px;width:1354px;height:36px;background:#2c313c"></div><svg style="left:0;top:0" width="1488" height="1320"><rect x="131.90" y="-49.70" width="2" height="36" fill="#3a3e46"/><rect x="189.50" y="-49.70" width="2" height="36" fill="#5c6068"/><rect x="131.90" y="-13.70" width="2" height="36" fill="#3a3e46"/><rect x="189.50" y="-13.70" width="2" height="36" fill="#5c6068"/><rect x="131.90" y="22.30" width="2" height="36" fill="#3a3e46"/><rect x="189.50" y="22.30" width="2" height="36" fill="#5c6068"/><rect x="131.90" y="58.30" width="2" height="36" fill="#3a3e46"/><rect x="189.50" y="58.30" width="2" height="36" fill="#5c6068"/><rect x="131.90" y="94.30" width="2" height="36" fill="#3a3e46"/><rect x="189.50" y="94.30" width="2" height="36" fill="#5c6068"/><rect x="131.90" y="130.30" width="2" height="36" fill="#3a3e46"/><rect x="189.50" y="130.30" width="2" height="36" fill="#5c6068"/><rect x="131.90" y="166.30" width="2" height="36" fill="#3a3e46"/><rect x="189.50" y="166.30" width="2" height="36" fill="#5c6068"/><rect x="131.90" y="202.30" width="2" height="36" fill="#3a3e46"/><rect x="189.50" y="202.30" width="2" height="36" fill="#5c6068"/><rect x="131.90" y="238.30" width="2" height="36" fill="#3a3e46"/><rect x="131.90" y="274.30" width="2" height="36" fill="#3a3e46"/><rect x="131.90" y="310.30" width="2" height="36" fill="#3a3e46"/><rect x="131.90" y="346.30" width="2" height="36" fill="#3a3e46"/><rect x="131.90" y="382.30" width="2" height="36" fill="#3a3e46"/><rect x="189.50" y="382.30" width="2" height="36" fill="#3a3e46"/><rect x="131.90" y="418.30" width="2" height="36" fill="#3a3e46"/><rect x="189.50" y="418.30" width="2" height="36" fill="#3a3e46"/><rect x="131.90" y="454.30" width="2" height="36" fill="#3a3e46"/><rect x="189.50" y="454.30" width="2" height="36" fill="#3a3e46"/><rect x="131.90" y="490.30" width="2" height="36" fill="#3a3e46"/><rect x="189.50" y="490.30" width="2" height="36" fill="#3a3e46"/><rect x="131.90" y="526.30" width="2" height="36" fill="#3a3e46"/><rect x="189.50" y="526.30" width="2" height="36" fill="#3a3e46"/><rect x="131.90" y="562.30" width="2" height="36" fill="#3a3e46"/><rect x="189.50" y="562.30" width="2" height="36" fill="#3a3e46"/><rect x="131.90" y="598.30" width="2" height="36" fill="#3a3e46"/><rect x="189.50" y="598.30" width="2" height="36" fill="#3a3e46"/><rect x="131.90" y="634.30" width="2" height="36" fill="#3a3e46"/><rect x="189.50" y="634.30" width="2" height="36" fill="#3a3e46"/><rect x="131.90" y="670.30" width="2" height="36" fill="#3a3e46"/><rect x="131.90" y="706.30" width="2" height="36" fill="#3a3e46"/><rect x="131.90" y="742.30" width="2" height="36" fill="#3a3e46"/><rect x="131.90" y="778.30" width="2" height="36" fill="#3a3e46"/><rect x="189.50" y="778.30" width="2" height="36" fill="#3a3e46"/><rect x="131.90" y="814.30" width="2" height="36" fill="#3a3e46"/><rect x="189.50" y="814.30" width="2" height="36" fill="#3a3e46"/><rect x="131.90" y="850.30" width="2" height="36" fill="#3a3e46"/><rect x="189.50" y="850.30" width="2" height="36" fill="#3a3e46"/><rect x="247.10" y="850.30" width="2" height="36" fill="#3a3e46"/><rect x="131.90" y="886.30" width="2" height="36" fill="#3a3e46"/><rect x="189.50" y="886.30" width="2" height="36" fill="#3a3e46"/><rect x="247.10" y="886.30" width="2" height="36" fill="#3a3e46"/><rect x="131.90" y="922.30" width="2" height="36" fill="#3a3e46"/><rect x="189.50" y="922.30" width="2" height="36" fill="#3a3e46"/><rect x="247.10" y="922.30" width="2" height="36" fill="#3a3e46"/><rect x="131.90" y="958.30" width="2" height="36" fill="#3a3e46"/><rect x="189.50" y="958.30" width="2" height="36" fill="#3a3e46"/><rect x="247.10" y="958.30" width="2" height="36" fill="#3a3e46"/><rect x="131.90" y="994.30" width="2" height="36" fill="#3a3e46"/><rect x="189.50" y="994.30" width="2" height="36" fill="#3a3e46"/><rect x="247.10" y="994.30" width="2" height="36" fill="#3a3e46"/><rect x="304.70" y="994.30" width="2" height="36" fill="#3a3e46"/><rect x="131.90" y="1030.30" width="2" height="36" fill="#3a3e46"/><rect x="189.50" y="1030.30" width="2" height="36" fill="#3a3e46"/><rect x="247.10" y="1030.30" width="2" height="36" fill="#3a3e46"/><rect x="304.70" y="1030.30" width="2" height="36" fill="#3a3e46"/><rect x="131.90" y="1066.30" width="2" height="36" fill="#3a3e46"/><rect x="189.50" y="1066.30" width="2" height="36" fill="#3a3e46"/><rect x="247.10" y="1066.30" width="2" height="36" fill="#3a3e46"/><rect x="131.90" y="1102.30" width="2" height="36" fill="#3a3e46"/><rect x="189.50" y="1102.30" width="2" height="36" fill="#3a3e46"/><rect x="247.10" y="1102.30" width="2" height="36" fill="#3a3e46"/><rect x="131.90" y="1138.30" width="2" height="36" fill="#3a3e46"/><rect x="189.50" y="1138.30" width="2" height="36" fill="#3a3e46"/><rect x="247.10" y="1138.30" width="2" height="36" fill="#3a3e46"/><rect x="131.90" y="1174.30" width="2" height="36" fill="#3a3e46"/><rect x="189.50" y="1174.30" width="2" height="36" fill="#3a3e46"/><rect x="247.10" y="1174.30" width="2" height="36" fill="#3a3e46"/><rect x="131.90" y="1210.30" width="2" height="36" fill="#3a3e46"/><rect x="189.50" y="1210.30" width="2" height="36" fill="#3a3e46"/><rect x="247.10" y="1210.30" width="2" height="36" fill="#3a3e46"/><rect x="131.90" y="1246.30" width="2" height="36" fill="#3a3e46"/><rect x="189.50" y="1246.30" width="2" height="36" fill="#3a3e46"/><rect x="247.10" y="1246.30" width="2" height="36" fill="#3a3e46"/><rect x="304.70" y="1246.30" width="2" height="36" fill="#3a3e46"/><rect x="131.90" y="1282.30" width="2" height="36" fill="#3a3e46"/><rect x="189.50" y="1282.30" width="2" height="36" fill="#3a3e46"/><rect x="247.10" y="1282.30" width="2" height="36" fill="#3a3e46"/><rect x="304.70" y="1282.30" width="2" height="36" fill="#3a3e46"/><rect x="131.90" y="1318.30" width="2" height="36" fill="#3a3e46"/><rect x="189.50" y="1318.30" width="2" height="36" fill="#3a3e46"/><rect x="247.10" y="1318.30" width="2" height="36" fill="#3a3e46"/><rect x="304.70" y="1318.30" width="2" height="36" fill="#3a3e46"/><path d="M131.60 -32.40 H145.60 M141.20 -37.00 L145.60 -32.40 L141.20 -27.80" stroke="#41454e" stroke-width="2" fill="none"/><path d="M189.20 -32.40 H203.20 M198.80 -37.00 L203.20 -32.40 L198.80 -27.80" stroke="#41454e" stroke-width="2" fill="none"/><circle cx="357.00" cy="-32.00" r="2.2" fill="#484c56"/><path d="M131.60 3.60 H145.60 M141.20 -1.00 L145.60 3.60 L141.20 8.20" stroke="#41454e" stroke-width="2" fill="none"/><path d="M189.20 3.60 H203.20 M198.80 -1.00 L203.20 3.60 L198.80 8.20" stroke="#41454e" stroke-width="2" fill="none"/><circle cx="342.60" cy="4.00" r="2.2" fill="#484c56"/><path d="M131.60 39.60 H145.60 M141.20 35.00 L145.60 39.60 L141.20 44.20" stroke="#41454e" stroke-width="2" fill="none"/><path d="M189.20 39.60 H203.20 M198.80 35.00 L203.20 39.60 L198.80 44.20" stroke="#41454e" stroke-width="2" fill="none"/><circle cx="328.20" cy="40.00" r="2.2" fill="#484c56"/><path d="M131.60 75.60 H145.60 M141.20 71.00 L145.60 75.60 L141.20 80.20" stroke="#41454e" stroke-width="2" fill="none"/><path d="M189.20 75.60 H203.20 M198.80 71.00 L203.20 75.60 L198.80 80.20" stroke="#41454e" stroke-width="2" fill="none"/><circle cx="328.20" cy="76.00" r="2.2" fill="#484c56"/><path d="M131.60 111.60 H145.60 M141.20 107.00 L145.60 111.60 L141.20 116.20" stroke="#41454e" stroke-width="2" fill="none"/><path d="M189.20 111.60 H203.20 M198.80 107.00 L203.20 111.60 L198.80 116.20" stroke="#41454e" stroke-width="2" fill="none"/><circle cx="328.20" cy="112.00" r="2.2" fill="#484c56"/><path d="M131.60 147.60 H145.60 M141.20 143.00 L145.60 147.60 L141.20 152.20" stroke="#41454e" stroke-width="2" fill="none"/><path d="M189.20 147.60 H203.20 M198.80 143.00 L203.20 147.60 L198.80 152.20" stroke="#41454e" stroke-width="2" fill="none"/><circle cx="342.60" cy="148.00" r="2.2" fill="#484c56"/><circle cx="429.00" cy="148.00" r="2.2" fill="#484c56"/><path d="M131.60 183.60 H145.60 M141.20 179.00 L145.60 183.60 L141.20 188.20" stroke="#41454e" stroke-width="2" fill="none"/><path d="M189.20 183.60 H203.20 M198.80 179.00 L203.20 183.60 L198.80 188.20" stroke="#41454e" stroke-width="2" fill="none"/><circle cx="357.00" cy="184.00" r="2.2" fill="#484c56"/><circle cx="443.40" cy="184.00" r="2.2" fill="#484c56"/><path d="M131.60 219.60 H145.60 M141.20 215.00 L145.60 219.60 L141.20 224.20" stroke="#41454e" stroke-width="2" fill="none"/><path d="M189.20 219.60 H203.20 M198.80 215.00 L203.20 219.60 L198.80 224.20" stroke="#41454e" stroke-width="2" fill="none"/><circle cx="357.00" cy="220.00" r="2.2" fill="#484c56"/><circle cx="443.40" cy="220.00" r="2.2" fill="#484c56"/><path d="M131.60 255.60 H145.60 M141.20 251.00 L145.60 255.60 L141.20 260.20" stroke="#41454e" stroke-width="2" fill="none"/><path d="M131.60 363.60 H145.60 M141.20 359.00 L145.60 363.60 L141.20 368.20" stroke="#41454e" stroke-width="2" fill="none"/><path d="M131.60 399.60 H145.60 M141.20 395.00 L145.60 399.60 L141.20 404.20" stroke="#41454e" stroke-width="2" fill="none"/><path d="M189.20 399.60 H203.20 M198.80 395.00 L203.20 399.60 L198.80 404.20" stroke="#41454e" stroke-width="2" fill="none"/><circle cx="357.00" cy="400.00" r="2.2" fill="#484c56"/><circle cx="429.00" cy="400.00" r="2.2" fill="#484c56"/><path d="M131.60 435.60 H145.60 M141.20 431.00 L145.60 435.60 L141.20 440.20" stroke="#41454e" stroke-width="2" fill="none"/><path d="M189.20 435.60 H203.20 M198.80 431.00 L203.20 435.60 L198.80 440.20" stroke="#41454e" stroke-width="2" fill="none"/><circle cx="357.00" cy="436.00" r="2.2" fill="#484c56"/><circle cx="429.00" cy="436.00" r="2.2" fill="#484c56"/><path d="M131.60 471.60 H145.60 M141.20 467.00 L145.60 471.60 L141.20 476.20" stroke="#41454e" stroke-width="2" fill="none"/><path d="M189.20 471.60 H203.20 M198.80 467.00 L203.20 471.60 L198.80 476.20" stroke="#41454e" stroke-width="2" fill="none"/><circle cx="357.00" cy="472.00" r="2.2" fill="#484c56"/><circle cx="429.00" cy="472.00" r="2.2" fill="#484c56"/><path d="M131.60 507.60 H145.60 M141.20 503.00 L145.60 507.60 L141.20 512.20" stroke="#41454e" stroke-width="2" fill="none"/><path d="M189.20 507.60 H203.20 M198.80 503.00 L203.20 507.60 L198.80 512.20" stroke="#41454e" stroke-width="2" fill="none"/><circle cx="357.00" cy="508.00" r="2.2" fill="#484c56"/><circle cx="429.00" cy="508.00" r="2.2" fill="#484c56"/><path d="M131.60 543.60 H145.60 M141.20 539.00 L145.60 543.60 L141.20 548.20" stroke="#41454e" stroke-width="2" fill="none"/><path d="M189.20 543.60 H203.20 M198.80 539.00 L203.20 543.60 L198.80 548.20" stroke="#41454e" stroke-width="2" fill="none"/><circle cx="357.00" cy="544.00" r="2.2" fill="#484c56"/><circle cx="429.00" cy="544.00" r="2.2" fill="#484c56"/><path d="M131.60 579.60 H145.60 M141.20 575.00 L145.60 579.60 L141.20 584.20" stroke="#41454e" stroke-width="2" fill="none"/><path d="M189.20 579.60 H203.20 M198.80 575.00 L203.20 579.60 L198.80 584.20" stroke="#41454e" stroke-width="2" fill="none"/><circle cx="357.00" cy="580.00" r="2.2" fill="#484c56"/><circle cx="429.00" cy="580.00" r="2.2" fill="#484c56"/><path d="M131.60 615.60 H145.60 M141.20 611.00 L145.60 615.60 L141.20 620.20" stroke="#41454e" stroke-width="2" fill="none"/><path d="M189.20 615.60 H203.20 M198.80 611.00 L203.20 615.60 L198.80 620.20" stroke="#41454e" stroke-width="2" fill="none"/><circle cx="357.00" cy="616.00" r="2.2" fill="#484c56"/><circle cx="472.20" cy="616.00" r="2.2" fill="#484c56"/><circle cx="501.00" cy="616.00" r="2.2" fill="#484c56"/><circle cx="529.80" cy="616.00" r="2.2" fill="#484c56"/><path d="M131.60 651.60 H145.60 M141.20 647.00 L145.60 651.60 L141.20 656.20" stroke="#41454e" stroke-width="2" fill="none"/><path d="M189.20 651.60 H203.20 M198.80 647.00 L203.20 651.60 L198.80 656.20" stroke="#41454e" stroke-width="2" fill="none"/><circle cx="357.00" cy="652.00" r="2.2" fill="#484c56"/><circle cx="429.00" cy="652.00" r="2.2" fill="#484c56"/><path d="M131.60 687.60 H145.60 M141.20 683.00 L145.60 687.60 L141.20 692.20" stroke="#41454e" stroke-width="2" fill="none"/><path d="M131.60 723.60 H145.60 M141.20 719.00 L145.60 723.60 L141.20 728.20" stroke="#41454e" stroke-width="2" fill="none"/><path d="M131.60 759.60 H145.60 M141.20 755.00 L145.60 759.60 L141.20 764.20" stroke="#41454e" stroke-width="2" fill="none"/><circle cx="285.00" cy="760.00" r="2.2" fill="#484c56"/><circle cx="414.60" cy="760.00" r="2.2" fill="#484c56"/><circle cx="472.20" cy="760.00" r="2.2" fill="#484c56"/><circle cx="558.60" cy="760.00" r="2.2" fill="#484c56"/><circle cx="673.80" cy="760.00" r="2.2" fill="#484c56"/><circle cx="789.00" cy="760.00" r="2.2" fill="#484c56"/><path d="M131.60 795.60 H145.60 M141.20 791.00 L145.60 795.60 L141.20 800.20" stroke="#41454e" stroke-width="2" fill="none"/><path d="M189.20 795.60 H203.20 M198.80 791.00 L203.20 795.60 L198.80 800.20" stroke="#41454e" stroke-width="2" fill="none"/><circle cx="328.20" cy="796.00" r="2.2" fill="#484c56"/><circle cx="443.40" cy="796.00" r="2.2" fill="#484c56"/><circle cx="472.20" cy="796.00" r="2.2" fill="#484c56"/><circle cx="501.00" cy="796.00" r="2.2" fill="#484c56"/><path d="M131.60 831.60 H145.60 M141.20 827.00 L145.60 831.60 L141.20 836.20" stroke="#41454e" stroke-width="2" fill="none"/><path d="M189.20 831.60 H203.20 M198.80 827.00 L203.20 831.60 L198.80 836.20" stroke="#41454e" stroke-width="2" fill="none"/><path d="M131.60 867.60 H145.60 M141.20 863.00 L145.60 867.60 L141.20 872.20" stroke="#41454e" stroke-width="2" fill="none"/><path d="M189.20 867.60 H203.20 M198.80 863.00 L203.20 867.60 L198.80 872.20" stroke="#41454e" stroke-width="2" fill="none"/><path d="M246.80 867.60 H260.80 M256.40 863.00 L260.80 867.60 L256.40 872.20" stroke="#41454e" stroke-width="2" fill="none"/><circle cx="371.40" cy="868.00" r="2.2" fill="#484c56"/><circle cx="702.60" cy="868.00" r="2.2" fill="#484c56"/><circle cx="947.40" cy="868.00" r="2.2" fill="#484c56"/><circle cx="1062.60" cy="868.00" r="2.2" fill="#484c56"/><circle cx="1177.80" cy="868.00" r="2.2" fill="#484c56"/><path d="M131.60 903.60 H145.60 M141.20 899.00 L145.60 903.60 L141.20 908.20" stroke="#41454e" stroke-width="2" fill="none"/><path d="M189.20 903.60 H203.20 M198.80 899.00 L203.20 903.60 L198.80 908.20" stroke="#41454e" stroke-width="2" fill="none"/><path d="M246.80 903.60 H260.80 M256.40 899.00 L260.80 903.60 L256.40 908.20" stroke="#41454e" stroke-width="2" fill="none"/><path d="M131.60 939.60 H145.60 M141.20 935.00 L145.60 939.60 L141.20 944.20" stroke="#41454e" stroke-width="2" fill="none"/><path d="M189.20 939.60 H203.20 M198.80 935.00 L203.20 939.60 L198.80 944.20" stroke="#41454e" stroke-width="2" fill="none"/><path d="M246.80 939.60 H260.80 M256.40 935.00 L260.80 939.60 L256.40 944.20" stroke="#41454e" stroke-width="2" fill="none"/><circle cx="357.00" cy="940.00" r="2.2" fill="#484c56"/><circle cx="457.80" cy="940.00" r="2.2" fill="#484c56"/><circle cx="486.60" cy="940.00" r="2.2" fill="#484c56"/><circle cx="587.40" cy="940.00" r="2.2" fill="#484c56"/><circle cx="616.20" cy="940.00" r="2.2" fill="#484c56"/><path d="M131.60 975.60 H145.60 M141.20 971.00 L145.60 975.60 L141.20 980.20" stroke="#41454e" stroke-width="2" fill="none"/><path d="M189.20 975.60 H203.20 M198.80 971.00 L203.20 975.60 L198.80 980.20" stroke="#41454e" stroke-width="2" fill="none"/><path d="M246.80 975.60 H260.80 M256.40 971.00 L260.80 975.60 L256.40 980.20" stroke="#41454e" stroke-width="2" fill="none"/><circle cx="342.60" cy="976.00" r="2.2" fill="#484c56"/><circle cx="443.40" cy="976.00" r="2.2" fill="#484c56"/><circle cx="472.20" cy="976.00" r="2.2" fill="#484c56"/><circle cx="544.20" cy="976.00" r="2.2" fill="#484c56"/><path d="M131.60 1011.60 H145.60 M141.20 1007.00 L145.60 1011.60 L141.20 1016.20" stroke="#41454e" stroke-width="2" fill="none"/><path d="M189.20 1011.60 H203.20 M198.80 1007.00 L203.20 1011.60 L198.80 1016.20" stroke="#41454e" stroke-width="2" fill="none"/><path d="M246.80 1011.60 H260.80 M256.40 1007.00 L260.80 1011.60 L256.40 1016.20" stroke="#41454e" stroke-width="2" fill="none"/><path d="M304.40 1011.60 H318.40 M314.00 1007.00 L318.40 1011.60 L314.00 1016.20" stroke="#41454e" stroke-width="2" fill="none"/><circle cx="414.60" cy="1012.00" r="2.2" fill="#484c56"/><circle cx="515.40" cy="1012.00" r="2.2" fill="#484c56"/><circle cx="544.20" cy="1012.00" r="2.2" fill="#484c56"/><circle cx="645.00" cy="1012.00" r="2.2" fill="#484c56"/><circle cx="673.80" cy="1012.00" r="2.2" fill="#484c56"/><path d="M131.60 1047.60 H145.60 M141.20 1043.00 L145.60 1047.60 L141.20 1052.20" stroke="#41454e" stroke-width="2" fill="none"/><path d="M189.20 1047.60 H203.20 M198.80 1043.00 L203.20 1047.60 L198.80 1052.20" stroke="#41454e" stroke-width="2" fill="none"/><path d="M246.80 1047.60 H260.80 M256.40 1043.00 L260.80 1047.60 L256.40 1052.20" stroke="#41454e" stroke-width="2" fill="none"/><path d="M304.40 1047.60 H318.40 M314.00 1043.00 L318.40 1047.60 L314.00 1052.20" stroke="#41454e" stroke-width="2" fill="none"/><circle cx="414.60" cy="1048.00" r="2.2" fill="#484c56"/><circle cx="515.40" cy="1048.00" r="2.2" fill="#484c56"/><circle cx="544.20" cy="1048.00" r="2.2" fill="#484c56"/><path d="M131.60 1083.60 H145.60 M141.20 1079.00 L145.60 1083.60 L141.20 1088.20" stroke="#41454e" stroke-width="2" fill="none"/><path d="M189.20 1083.60 H203.20 M198.80 1079.00 L203.20 1083.60 L198.80 1088.20" stroke="#41454e" stroke-width="2" fill="none"/><path d="M246.80 1083.60 H260.80 M256.40 1079.00 L260.80 1083.60 L256.40 1088.20" stroke="#41454e" stroke-width="2" fill="none"/><path d="M131.60 1119.60 H145.60 M141.20 1115.00 L145.60 1119.60 L141.20 1124.20" stroke="#41454e" stroke-width="2" fill="none"/><path d="M189.20 1119.60 H203.20 M198.80 1115.00 L203.20 1119.60 L198.80 1124.20" stroke="#41454e" stroke-width="2" fill="none"/><path d="M246.80 1119.60 H260.80 M256.40 1115.00 L260.80 1119.60 L256.40 1124.20" stroke="#41454e" stroke-width="2" fill="none"/><path d="M131.60 1155.60 H145.60 M141.20 1151.00 L145.60 1155.60 L141.20 1160.20" stroke="#41454e" stroke-width="2" fill="none"/><path d="M189.20 1155.60 H203.20 M198.80 1151.00 L203.20 1155.60 L198.80 1160.20" stroke="#41454e" stroke-width="2" fill="none"/><path d="M246.80 1155.60 H260.80 M256.40 1151.00 L260.80 1155.60 L256.40 1160.20" stroke="#41454e" stroke-width="2" fill="none"/><circle cx="357.00" cy="1156.00" r="2.2" fill="#484c56"/><circle cx="385.80" cy="1156.00" r="2.2" fill="#484c56"/><circle cx="414.60" cy="1156.00" r="2.2" fill="#484c56"/><circle cx="443.40" cy="1156.00" r="2.2" fill="#484c56"/><circle cx="472.20" cy="1156.00" r="2.2" fill="#484c56"/><path d="M131.60 1191.60 H145.60 M141.20 1187.00 L145.60 1191.60 L141.20 1196.20" stroke="#41454e" stroke-width="2" fill="none"/><path d="M189.20 1191.60 H203.20 M198.80 1187.00 L203.20 1191.60 L198.80 1196.20" stroke="#41454e" stroke-width="2" fill="none"/><path d="M246.80 1191.60 H260.80 M256.40 1187.00 L260.80 1191.60 L256.40 1196.20" stroke="#41454e" stroke-width="2" fill="none"/><path d="M131.60 1227.60 H145.60 M141.20 1223.00 L145.60 1227.60 L141.20 1232.20" stroke="#41454e" stroke-width="2" fill="none"/><path d="M189.20 1227.60 H203.20 M198.80 1223.00 L203.20 1227.60 L198.80 1232.20" stroke="#41454e" stroke-width="2" fill="none"/><path d="M246.80 1227.60 H260.80 M256.40 1223.00 L260.80 1227.60 L256.40 1232.20" stroke="#41454e" stroke-width="2" fill="none"/><circle cx="342.60" cy="1228.00" r="2.2" fill="#484c56"/><circle cx="443.40" cy="1228.00" r="2.2" fill="#484c56"/><circle cx="472.20" cy="1228.00" r="2.2" fill="#484c56"/><circle cx="544.20" cy="1228.00" r="2.2" fill="#484c56"/><path d="M131.60 1263.60 H145.60 M141.20 1259.00 L145.60 1263.60 L141.20 1268.20" stroke="#41454e" stroke-width="2" fill="none"/><path d="M189.20 1263.60 H203.20 M198.80 1259.00 L203.20 1263.60 L198.80 1268.20" stroke="#41454e" stroke-width="2" fill="none"/><path d="M246.80 1263.60 H260.80 M256.40 1259.00 L260.80 1263.60 L256.40 1268.20" stroke="#41454e" stroke-width="2" fill="none"/><path d="M304.40 1263.60 H318.40 M314.00 1259.00 L318.40 1263.60 L314.00 1268.20" stroke="#41454e" stroke-width="2" fill="none"/><circle cx="414.60" cy="1264.00" r="2.2" fill="#484c56"/><circle cx="443.40" cy="1264.00" r="2.2" fill="#484c56"/><circle cx="472.20" cy="1264.00" r="2.2" fill="#484c56"/><path d="M131.60 1299.60 H145.60 M141.20 1295.00 L145.60 1299.60 L141.20 1304.20" stroke="#41454e" stroke-width="2" fill="none"/><path d="M189.20 1299.60 H203.20 M198.80 1295.00 L203.20 1299.60 L198.80 1304.20" stroke="#41454e" stroke-width="2" fill="none"/><path d="M246.80 1299.60 H260.80 M256.40 1295.00 L260.80 1299.60 L256.40 1304.20" stroke="#41454e" stroke-width="2" fill="none"/><path d="M304.40 1299.60 H318.40 M314.00 1295.00 L318.40 1299.60 L314.00 1304.20" stroke="#41454e" stroke-width="2" fill="none"/><circle cx="486.60" cy="1300.00" r="2.2" fill="#484c56"/><path d="M131.60 1335.60 H145.60 M141.20 1331.00 L145.60 1335.60 L141.20 1340.20" stroke="#41454e" stroke-width="2" fill="none"/><path d="M189.20 1335.60 H203.20 M198.80 1331.00 L203.20 1335.60 L198.80 1340.20" stroke="#41454e" stroke-width="2" fill="none"/><path d="M246.80 1335.60 H260.80 M256.40 1331.00 L260.80 1335.60 L256.40 1340.20" stroke="#41454e" stroke-width="2" fill="none"/></svg><div class="code" style="left:133.80px;top:-48.90px;transform:scaleY(1.05);transform-origin:0 25px">        <span class="y">trigger</span> <span class="r">ICHEAT</span></div><div class="code" style="left:0px;width:79.50px;text-align:right;top:-48.90px;color:#495162;transform:scaleY(1.12);transform-origin:0 25px">10</div><div class="code" style="left:133.80px;top:-12.90px;transform:scaleY(1.05);transform-origin:0 25px">        <span class="y">string</span> <span class="r">Activator</span></div><div class="code" style="left:0px;width:79.50px;text-align:right;top:-12.90px;color:#495162;transform:scaleY(1.12);transform-origin:0 25px">11</div><div class="code" style="left:133.80px;top:23.10px;transform:scaleY(1.05);transform-origin:0 25px">        <span class="y">force</span> <span class="r">udg_hear</span></div><div class="code" style="left:0px;width:79.50px;text-align:right;top:23.10px;color:#abb2bf;transform:scaleY(1.12);transform-origin:0 25px">12</div><div class="code" style="left:133.80px;top:59.10px;transform:scaleY(1.05);transform-origin:0 25px">        <span class="y">force</span> <span class="r">CHEATER</span></div><div class="code" style="left:0px;width:79.50px;text-align:right;top:59.10px;color:#495162;transform:scaleY(1.12);transform-origin:0 25px">13</div><div class="code" style="left:133.80px;top:95.10px;transform:scaleY(1.05);transform-origin:0 25px">        <span class="y">group</span> <span class="r">Heal</span></div><div class="code" style="left:0px;width:79.50px;text-align:right;top:95.10px;color:#495162;transform:scaleY(1.12);transform-origin:0 25px">14</div><div class="code" style="left:133.80px;top:131.10px;transform:scaleY(1.05);transform-origin:0 25px">        <span class="y">string</span> <span class="k">array</span> <span class="r">S2RAWa</span></div><div class="code" style="left:0px;width:79.50px;text-align:right;top:131.10px;color:#495162;transform:scaleY(1.12);transform-origin:0 25px">15</div><div class="code" style="left:133.80px;top:167.10px;transform:scaleY(1.05);transform-origin:0 25px">        <span class="y">integer</span> <span class="k">array</span> <span class="r">S2RAW</span></div><div class="code" style="left:0px;width:79.50px;text-align:right;top:167.10px;color:#495162;transform:scaleY(1.12);transform-origin:0 25px">16</div><div class="code" style="left:133.80px;top:203.10px;transform:scaleY(1.05);transform-origin:0 25px">        <span class="y">integer</span> <span class="k">array</span> <span class="r">skins</span></div><div class="code" style="left:0px;width:79.50px;text-align:right;top:203.10px;color:#495162;transform:scaleY(1.12);transform-origin:0 25px">17</div><div class="code" style="left:133.80px;top:239.10px;transform:scaleY(1.05);transform-origin:0 25px">    <span class="k">endglobals</span></div><div class="code" style="left:0px;width:79.50px;text-align:right;top:239.10px;color:#495162;transform:scaleY(1.12);transform-origin:0 25px">18</div><div class="code" style="left:133.80px;top:275.10px;transform:scaleY(1.05);transform-origin:0 25px"></div><div class="code" style="left:0px;width:79.50px;text-align:right;top:275.10px;color:#495162;transform:scaleY(1.12);transform-origin:0 25px">19</div><div class="code" style="left:133.80px;top:311.10px;transform:scaleY(1.05);transform-origin:0 25px"></div><div class="code" style="left:0px;width:79.50px;text-align:right;top:311.10px;color:#495162;transform:scaleY(1.12);transform-origin:0 25px">20</div><div class="code" style="left:133.80px;top:347.10px;transform:scaleY(1.05);transform-origin:0 25px">    <span class="k">globals</span></div><div class="code" style="left:0px;width:79.50px;text-align:right;top:347.10px;color:#495162;transform:scaleY(1.12);transform-origin:0 25px">21</div><div class="code" style="left:133.80px;top:383.10px;transform:scaleY(1.05);transform-origin:0 25px">        <span class="k">private</span> <span class="y">real</span> <span class="r">maxX</span></div><div class="code" style="left:0px;width:79.50px;text-align:right;top:383.10px;color:#495162;transform:scaleY(1.12);transform-origin:0 25px">22</div><div class="code" style="left:133.80px;top:419.10px;transform:scaleY(1.05);transform-origin:0 25px">        <span class="k">private</span> <span class="y">real</span> <span class="r">minX</span></div><div class="code" style="left:0px;width:79.50px;text-align:right;top:419.10px;color:#495162;transform:scaleY(1.12);transform-origin:0 25px">23</div><div class="code" style="left:133.80px;top:455.10px;transform:scaleY(1.05);transform-origin:0 25px">        <span class="k">private</span> <span class="y">real</span> <span class="r">maxY</span></div><div class="code" style="left:0px;width:79.50px;text-align:right;top:455.10px;color:#495162;transform:scaleY(1.12);transform-origin:0 25px">24</div><div class="code" style="left:133.80px;top:491.10px;transform:scaleY(1.05);transform-origin:0 25px">        <span class="k">private</span> <span class="y">real</span> <span class="r">minY</span></div><div class="code" style="left:0px;width:79.50px;text-align:right;top:491.10px;color:#495162;transform:scaleY(1.12);transform-origin:0 25px">25</div><div class="code" style="left:133.80px;top:527.10px;transform:scaleY(1.05);transform-origin:0 25px">        <span class="k">private</span> <span class="y">real</span> <span class="r">pointX</span></div><div class="code" style="left:0px;width:79.50px;text-align:right;top:527.10px;color:#495162;transform:scaleY(1.12);transform-origin:0 25px">26</div><div class="code" style="left:133.80px;top:563.10px;transform:scaleY(1.05);transform-origin:0 25px">        <span class="k">private</span> <span class="y">real</span> <span class="r">pointY</span></div><div class="code" style="left:0px;width:79.50px;text-align:right;top:563.10px;color:#495162;transform:scaleY(1.12);transform-origin:0 25px">27</div><div class="code" style="left:133.80px;top:599.10px;transform:scaleY(1.05);transform-origin:0 25px">        <span class="k">private</span> <span class="y">boolean</span> <span class="r">b</span> <span class="p">=</span> <span class="k">true</span></div><div class="code" style="left:0px;width:79.50px;text-align:right;top:599.10px;color:#495162;transform:scaleY(1.12);transform-origin:0 25px">28</div><div class="code" style="left:133.80px;top:635.10px;transform:scaleY(1.05);transform-origin:0 25px">        <span class="k">private</span> <span class="y">rect</span> <span class="r">rectMH</span></div><div class="code" style="left:0px;width:79.50px;text-align:right;top:635.10px;color:#495162;transform:scaleY(1.12);transform-origin:0 25px">29</div><div class="code" style="left:133.80px;top:671.10px;transform:scaleY(1.05);transform-origin:0 25px">    <span class="k">endglobals</span></div><div class="code" style="left:0px;width:79.50px;text-align:right;top:671.10px;color:#495162;transform:scaleY(1.12);transform-origin:0 25px">30</div><div class="code" style="left:133.80px;top:707.10px;transform:scaleY(1.05);transform-origin:0 25px">    </div><div class="code" style="left:0px;width:79.50px;text-align:right;top:707.10px;color:#495162;transform:scaleY(1.12);transform-origin:0 25px">31</div><div class="code" style="left:133.80px;top:743.10px;transform:scaleY(1.05);transform-origin:0 25px">    <span class="k">public</span> <span class="k">function</span> <span class="b">Run</span> <span class="k">takes</span> <span class="k">nothing</span> <span class="k">returns</span> <span class="k">nothing</span></div><div class="code" style="left:0px;width:79.50px;text-align:right;top:743.10px;color:#495162;transform:scaleY(1.12);transform-origin:0 25px">32</div><div class="code" style="left:133.80px;top:779.10px;transform:scaleY(1.05);transform-origin:0 25px">        <span class="k">local</span> <span class="y">integer</span> <span class="r">i</span> <span class="p">=</span> <span class="o">0</span></div><div class="code" style="left:0px;width:79.50px;text-align:right;top:779.10px;color:#495162;transform:scaleY(1.12);transform-origin:0 25px">33</div><div class="code" style="left:133.80px;top:815.10px;transform:scaleY(1.05);transform-origin:0 25px">        <span class="k">loop</span></div><div class="code" style="left:0px;width:79.50px;text-align:right;top:815.10px;color:#495162;transform:scaleY(1.12);transform-origin:0 25px">34</div><div class="code" style="left:133.80px;top:851.10px;transform:scaleY(1.05);transform-origin:0 25px">            <span class="r">call</span> <span class="b">CreateUnit</span><span class="p">(</span><span class="r">Player</span><span class="p">(</span><span class="o">13</span><span class="p">)</span><span class="p">,</span> <span class="r">ANTI_MH_UNIT_ID</span><span class="p">,</span> <span class="r">pointX</span><span class="p">,</span> <span class="r">pointY</span><span class="p">,</span> <span class="o">90</span><span class="p">)</span></div><div class="code" style="left:0px;width:79.50px;text-align:right;top:851.10px;color:#495162;transform:scaleY(1.12);transform-origin:0 25px">35</div><div class="code" style="left:133.80px;top:887.10px;transform:scaleY(1.05);transform-origin:0 25px">            </div><div class="code" style="left:0px;width:79.50px;text-align:right;top:887.10px;color:#495162;transform:scaleY(1.12);transform-origin:0 25px">36</div><div class="code" style="left:133.80px;top:923.10px;transform:scaleY(1.05);transform-origin:0 25px">            <span class="k">set</span> <span class="r">pointY</span> <span class="p">=</span> <span class="r">pointY</span> <span class="p">–</span> <span class="o">512.</span></div><div class="code" style="left:0px;width:79.50px;text-align:right;top:923.10px;color:#495162;transform:scaleY(1.12);transform-origin:0 25px">37</div><div class="code" style="left:133.80px;top:959.10px;transform:scaleY(1.05);transform-origin:0 25px">            <span class="k">if</span> <span class="r">pointY</span> <span class="p">&lt;</span> <span class="r">minY</span> <span class="k">then</span></div><div class="code" style="left:0px;width:79.50px;text-align:right;top:959.10px;color:#495162;transform:scaleY(1.12);transform-origin:0 25px">38</div><div class="code" style="left:133.80px;top:995.10px;transform:scaleY(1.05);transform-origin:0 25px">                <span class="k">set</span> <span class="r">pointX</span> <span class="p">=</span> <span class="r">pointX</span> <span class="p">–</span> <span class="o">512.</span></div><div class="code" style="left:0px;width:79.50px;text-align:right;top:995.10px;color:#495162;transform:scaleY(1.12);transform-origin:0 25px">39</div><div class="code" style="left:133.80px;top:1031.10px;transform:scaleY(1.05);transform-origin:0 25px">                <span class="k">set</span> <span class="r">pointY</span> <span class="p">=</span> <span class="r">maxY</span></div><div class="code" style="left:0px;width:79.50px;text-align:right;top:1031.10px;color:#495162;transform:scaleY(1.12);transform-origin:0 25px">40</div><div class="code" style="left:133.80px;top:1067.10px;transform:scaleY(1.05);transform-origin:0 25px">            <span class="k">endif</span></div><div class="code" style="left:0px;width:79.50px;text-align:right;top:1067.10px;color:#495162;transform:scaleY(1.12);transform-origin:0 25px">41</div><div class="code" style="left:133.80px;top:1103.10px;transform:scaleY(1.05);transform-origin:0 25px">            </div><div class="code" style="left:0px;width:79.50px;text-align:right;top:1103.10px;color:#495162;transform:scaleY(1.12);transform-origin:0 25px">42</div><div class="code" style="left:133.80px;top:1139.10px;transform:scaleY(1.05);transform-origin:0 25px">            <span class="k">set</span> <span class="r">i</span> <span class="p">=</span> <span class="r">i</span> <span class="p">+</span> <span class="o">1</span></div><div class="code" style="left:0px;width:79.50px;text-align:right;top:1139.10px;color:#495162;transform:scaleY(1.12);transform-origin:0 25px">43</div><div class="code" style="left:133.80px;top:1175.10px;transform:scaleY(1.05);transform-origin:0 25px">            </div><div class="code" style="left:0px;width:79.50px;text-align:right;top:1175.10px;color:#495162;transform:scaleY(1.12);transform-origin:0 25px">44</div><div class="code" style="left:133.80px;top:1211.10px;transform:scaleY(1.05);transform-origin:0 25px">            <span class="k">if</span> <span class="r">pointX</span> <span class="p">&lt;</span> <span class="r">minX</span> <span class="k">then</span></div><div class="code" style="left:0px;width:79.50px;text-align:right;top:1211.10px;color:#495162;transform:scaleY(1.12);transform-origin:0 25px">45</div><div class="code" style="left:133.80px;top:1247.10px;transform:scaleY(1.05);transform-origin:0 25px">                <span class="k">set</span> <span class="r">b</span> <span class="p">=</span> <span class="k">false</span></div><div class="code" style="left:0px;width:79.50px;text-align:right;top:1247.10px;color:#495162;transform:scaleY(1.12);transform-origin:0 25px">46</div><div class="code" style="left:133.80px;top:1283.10px;transform:scaleY(1.05);transform-origin:0 25px">                <span class="k">exitwhen</span> <span class="k">true</span></div><div class="code" style="left:0px;width:79.50px;text-align:right;top:1283.10px;color:#495162;transform:scaleY(1.12);transform-origin:0 25px">47</div><div class="code" style="left:133.80px;top:1319.10px;transform:scaleY(1.05);transform-origin:0 25px">            <span class="k">endif</span></div><div class="code" style="left:0px;width:79.50px;text-align:right;top:1319.10px;color:#495162;transform:scaleY(1.12);transform-origin:0 25px">48</div></div><svg style="left:-112px;top:-76px" width="2716" height="1772"><rect x="2380" y="260.4" width="14" height="3" fill="#c678dd" fill-opacity="0.48"/><rect x="2396" y="260.4" width="12" height="3" fill="#e5c07b" fill-opacity="0.48"/><rect x="2410" y="260.4" width="22" height="3" fill="#c678dd" fill-opacity="0.48"/><rect x="2434" y="260.4" width="8" height="3" fill="#e5c07b" fill-opacity="0.48"/><rect x="2388" y="268.4" width="14" height="3" fill="#c678dd" fill-opacity="0.48"/><rect x="2396" y="272.4" width="14" height="3" fill="#e5c07b" fill-opacity="0.48"/><rect x="2412" y="272.4" width="22" height="3" fill="#e06c75" fill-opacity="0.48"/><rect x="2396" y="276.4" width="14" height="3" fill="#e5c07b" fill-opacity="0.48"/><rect x="2412" y="276.4" width="22" height="3" fill="#e06c75" fill-opacity="0.48"/><rect x="2396" y="280.4" width="14" height="3" fill="#e5c07b" fill-opacity="0.48"/><rect x="2412" y="280.4" width="22" height="3" fill="#e06c75" fill-opacity="0.48"/><rect x="2396" y="284.4" width="14" height="3" fill="#e5c07b" fill-opacity="0.48"/><rect x="2412" y="284.4" width="20" height="3" fill="#e06c75" fill-opacity="0.48"/><rect x="2396" y="288.4" width="14" height="3" fill="#e5c07b" fill-opacity="0.48"/><rect x="2412" y="288.4" width="20" height="3" fill="#e06c75" fill-opacity="0.48"/><rect x="2396" y="292.4" width="14" height="3" fill="#e5c07b" fill-opacity="0.48"/><rect x="2412" y="292.4" width="12" height="3" fill="#e06c75" fill-opacity="0.48"/><rect x="2396" y="296.4" width="14" height="3" fill="#e5c07b" fill-opacity="0.48"/><rect x="2412" y="296.4" width="12" height="3" fill="#e06c75" fill-opacity="0.48"/><rect x="2396" y="300.4" width="12" height="3" fill="#e5c07b" fill-opacity="0.48"/><rect x="2410" y="300.4" width="18" height="3" fill="#e06c75" fill-opacity="0.48"/><rect x="2396" y="304.4" width="10" height="3" fill="#e5c07b" fill-opacity="0.48"/><rect x="2408" y="304.4" width="16" height="3" fill="#e06c75" fill-opacity="0.48"/><rect x="2396" y="308.4" width="10" height="3" fill="#e5c07b" fill-opacity="0.48"/><rect x="2408" y="308.4" width="14" height="3" fill="#e06c75" fill-opacity="0.48"/><rect x="2396" y="312.4" width="10" height="3" fill="#e5c07b" fill-opacity="0.48"/><rect x="2408" y="312.4" width="8" height="3" fill="#e06c75" fill-opacity="0.48"/><rect x="2396" y="316.4" width="12" height="3" fill="#e5c07b" fill-opacity="0.48"/><rect x="2410" y="316.4" width="10" height="3" fill="#c678dd" fill-opacity="0.48"/><rect x="2422" y="316.4" width="12" height="3" fill="#e06c75" fill-opacity="0.48"/><rect x="2396" y="320.4" width="14" height="3" fill="#e5c07b" fill-opacity="0.48"/><rect x="2412" y="320.4" width="10" height="3" fill="#c678dd" fill-opacity="0.48"/><rect x="2424" y="320.4" width="10" height="3" fill="#e06c75" fill-opacity="0.48"/><rect x="2396" y="324.4" width="14" height="3" fill="#e5c07b" fill-opacity="0.48"/><rect x="2412" y="324.4" width="10" height="3" fill="#c678dd" fill-opacity="0.48"/><rect x="2424" y="324.4" width="10" height="3" fill="#e06c75" fill-opacity="0.48"/><rect x="2388" y="328.4" width="20" height="3" fill="#c678dd" fill-opacity="0.48"/><rect x="2388" y="340.4" width="14" height="3" fill="#c678dd" fill-opacity="0.48"/><rect x="2396" y="344.4" width="14" height="3" fill="#c678dd" fill-opacity="0.48"/><rect x="2412" y="344.4" width="8" height="3" fill="#e5c07b" fill-opacity="0.48"/><rect x="2422" y="344.4" width="8" height="3" fill="#e06c75" fill-opacity="0.48"/><rect x="2396" y="348.4" width="14" height="3" fill="#c678dd" fill-opacity="0.48"/><rect x="2412" y="348.4" width="8" height="3" fill="#e5c07b" fill-opacity="0.48"/><rect x="2422" y="348.4" width="8" height="3" fill="#e06c75" fill-opacity="0.48"/><rect x="2396" y="352.4" width="14" height="3" fill="#c678dd" fill-opacity="0.48"/><rect x="2412" y="352.4" width="8" height="3" fill="#e5c07b" fill-opacity="0.48"/><rect x="2422" y="352.4" width="8" height="3" fill="#e06c75" fill-opacity="0.48"/><rect x="2396" y="356.4" width="14" height="3" fill="#c678dd" fill-opacity="0.48"/><rect x="2412" y="356.4" width="8" height="3" fill="#e5c07b" fill-opacity="0.48"/><rect x="2422" y="356.4" width="8" height="3" fill="#e06c75" fill-opacity="0.48"/><rect x="2396" y="360.4" width="14" height="3" fill="#c678dd" fill-opacity="0.48"/><rect x="2412" y="360.4" width="8" height="3" fill="#e5c07b" fill-opacity="0.48"/><rect x="2422" y="360.4" width="12" height="3" fill="#e06c75" fill-opacity="0.48"/><rect x="2396" y="364.4" width="14" height="3" fill="#c678dd" fill-opacity="0.48"/><rect x="2412" y="364.4" width="8" height="3" fill="#e5c07b" fill-opacity="0.48"/><rect x="2422" y="364.4" width="12" height="3" fill="#e06c75" fill-opacity="0.48"/><rect x="2396" y="368.4" width="14" height="3" fill="#c678dd" fill-opacity="0.48"/><rect x="2412" y="368.4" width="14" height="3" fill="#e5c07b" fill-opacity="0.48"/><rect x="2428" y="368.4" width="2" height="3" fill="#e06c75" fill-opacity="0.48"/><rect x="2432" y="368.4" width="2" height="3" fill="#abb2bf" fill-opacity="0.3"/><rect x="2436" y="368.4" width="8" height="3" fill="#c678dd" fill-opacity="0.48"/><rect x="2396" y="372.4" width="14" height="3" fill="#c678dd" fill-opacity="0.48"/><rect x="2412" y="372.4" width="8" height="3" fill="#e5c07b" fill-opacity="0.48"/><rect x="2422" y="372.4" width="12" height="3" fill="#e06c75" fill-opacity="0.48"/><rect x="2388" y="376.4" width="20" height="3" fill="#c678dd" fill-opacity="0.48"/><rect x="2388" y="384.4" width="12" height="3" fill="#c678dd" fill-opacity="0.48"/><rect x="2402" y="384.4" width="16" height="3" fill="#c678dd" fill-opacity="0.48"/><rect x="2420" y="384.4" width="6" height="3" fill="#61afef" fill-opacity="0.48"/><rect x="2428" y="384.4" width="10" height="3" fill="#c678dd" fill-opacity="0.48"/><rect x="2440" y="384.4" width="14" height="3" fill="#c678dd" fill-opacity="0.48"/><rect x="2456" y="384.4" width="14" height="3" fill="#c678dd" fill-opacity="0.48"/><rect x="2472" y="384.4" width="14" height="3" fill="#c678dd" fill-opacity="0.48"/><rect x="2396" y="388.4" width="10" height="3" fill="#c678dd" fill-opacity="0.48"/><rect x="2408" y="388.4" width="14" height="3" fill="#e5c07b" fill-opacity="0.48"/><rect x="2424" y="388.4" width="2" height="3" fill="#e06c75" fill-opacity="0.48"/><rect x="2428" y="388.4" width="2" height="3" fill="#abb2bf" fill-opacity="0.3"/><rect x="2432" y="388.4" width="2" height="3" fill="#d19a66" fill-opacity="0.48"/><rect x="2396" y="392.4" width="8" height="3" fill="#c678dd" fill-opacity="0.48"/><rect x="2404" y="396.4" width="8" height="3" fill="#e06c75" fill-opacity="0.48"/><rect x="2414" y="396.4" width="20" height="3" fill="#61afef" fill-opacity="0.48"/><rect x="2434" y="396.4" width="2" height="3" fill="#abb2bf" fill-opacity="0.3"/><rect x="2436" y="396.4" width="12" height="3" fill="#e06c75" fill-opacity="0.48"/><rect x="2448" y="396.4" width="2" height="3" fill="#abb2bf" fill-opacity="0.3"/><rect x="2450" y="396.4" width="4" height="3" fill="#d19a66" fill-opacity="0.48"/><rect x="2454" y="396.4" width="2" height="3" fill="#abb2bf" fill-opacity="0.3"/><rect x="2456" y="396.4" width="2" height="3" fill="#abb2bf" fill-opacity="0.3"/><rect x="2460" y="396.4" width="30" height="3" fill="#e06c75" fill-opacity="0.48"/><rect x="2490" y="396.4" width="2" height="3" fill="#abb2bf" fill-opacity="0.3"/><rect x="2494" y="396.4" width="12" height="3" fill="#e06c75" fill-opacity="0.48"/><rect x="2506" y="396.4" width="2" height="3" fill="#abb2bf" fill-opacity="0.3"/><rect x="2510" y="396.4" width="12" height="3" fill="#e06c75" fill-opacity="0.48"/><rect x="2522" y="396.4" width="2" height="3" fill="#abb2bf" fill-opacity="0.3"/><rect x="2526" y="396.4" width="4" height="3" fill="#d19a66" fill-opacity="0.48"/><rect x="2530" y="396.4" width="2" height="3" fill="#abb2bf" fill-opacity="0.3"/><rect x="2404" y="404.4" width="6" height="3" fill="#c678dd" fill-opacity="0.48"/><rect x="2412" y="404.4" width="12" height="3" fill="#e06c75" fill-opacity="0.48"/><rect x="2426" y="404.4" width="2" height="3" fill="#abb2bf" fill-opacity="0.3"/><rect x="2430" y="404.4" width="12" height="3" fill="#e06c75" fill-opacity="0.48"/><rect x="2444" y="404.4" width="2" height="3" fill="#abb2bf" fill-opacity="0.3"/><rect x="2448" y="404.4" width="8" height="3" fill="#d19a66" fill-opacity="0.48"/><rect x="2404" y="408.4" width="4" height="3" fill="#c678dd" fill-opacity="0.48"/><rect x="2410" y="408.4" width="12" height="3" fill="#e06c75" fill-opacity="0.48"/><rect x="2424" y="408.4" width="2" height="3" fill="#abb2bf" fill-opacity="0.3"/><rect x="2428" y="408.4" width="8" height="3" fill="#e06c75" fill-opacity="0.48"/><rect x="2438" y="408.4" width="8" height="3" fill="#c678dd" fill-opacity="0.48"/><rect x="2412" y="412.4" width="6" height="3" fill="#c678dd" fill-opacity="0.48"/><rect x="2420" y="412.4" width="12" height="3" fill="#e06c75" fill-opacity="0.48"/><rect x="2434" y="412.4" width="2" height="3" fill="#abb2bf" fill-opacity="0.3"/><rect x="2438" y="412.4" width="12" height="3" fill="#e06c75" fill-opacity="0.48"/><rect x="2452" y="412.4" width="2" height="3" fill="#abb2bf" fill-opacity="0.3"/><rect x="2456" y="412.4" width="8" height="3" fill="#d19a66" fill-opacity="0.48"/><rect x="2412" y="416.4" width="6" height="3" fill="#c678dd" fill-opacity="0.48"/><rect x="2420" y="416.4" width="12" height="3" fill="#e06c75" fill-opacity="0.48"/><rect x="2434" y="416.4" width="2" height="3" fill="#abb2bf" fill-opacity="0.3"/><rect x="2438" y="416.4" width="8" height="3" fill="#e06c75" fill-opacity="0.48"/><rect x="2404" y="420.4" width="10" height="3" fill="#c678dd" fill-opacity="0.48"/><rect x="2404" y="428.4" width="6" height="3" fill="#c678dd" fill-opacity="0.48"/><rect x="2412" y="428.4" width="2" height="3" fill="#e06c75" fill-opacity="0.48"/><rect x="2416" y="428.4" width="2" height="3" fill="#abb2bf" fill-opacity="0.3"/><rect x="2420" y="428.4" width="2" height="3" fill="#e06c75" fill-opacity="0.48"/><rect x="2424" y="428.4" width="2" height="3" fill="#abb2bf" fill-opacity="0.3"/><rect x="2428" y="428.4" width="2" height="3" fill="#d19a66" fill-opacity="0.48"/><rect x="2404" y="436.4" width="4" height="3" fill="#c678dd" fill-opacity="0.48"/><rect x="2410" y="436.4" width="12" height="3" fill="#e06c75" fill-opacity="0.48"/><rect x="2424" y="436.4" width="2" height="3" fill="#abb2bf" fill-opacity="0.3"/><rect x="2428" y="436.4" width="8" height="3" fill="#e06c75" fill-opacity="0.48"/><rect x="2438" y="436.4" width="8" height="3" fill="#c678dd" fill-opacity="0.48"/><rect x="2412" y="440.4" width="6" height="3" fill="#c678dd" fill-opacity="0.48"/><rect x="2420" y="440.4" width="2" height="3" fill="#e06c75" fill-opacity="0.48"/><rect x="2424" y="440.4" width="2" height="3" fill="#abb2bf" fill-opacity="0.3"/><rect x="2428" y="440.4" width="10" height="3" fill="#c678dd" fill-opacity="0.48"/><rect x="2412" y="444.4" width="16" height="3" fill="#c678dd" fill-opacity="0.48"/><rect x="2430" y="444.4" width="8" height="3" fill="#c678dd" fill-opacity="0.48"/><rect x="2404" y="448.4" width="10" height="3" fill="#c678dd" fill-opacity="0.48"/><rect x="2404" y="452.4" width="16" height="3" fill="#c678dd" fill-opacity="0.48"/><rect x="2420" y="452.4" width="2" height="3" fill="#abb2bf" fill-opacity="0.3"/><rect x="2424" y="452.4" width="2" height="3" fill="#e06c75" fill-opacity="0.48"/><rect x="2428" y="452.4" width="2" height="3" fill="#abb2bf" fill-opacity="0.3"/><rect x="2430" y="452.4" width="2" height="3" fill="#abb2bf" fill-opacity="0.3"/><rect x="2434" y="452.4" width="8" height="3" fill="#d19a66" fill-opacity="0.48"/><rect x="2444" y="452.4" width="2" height="3" fill="#abb2bf" fill-opacity="0.3"/><rect x="2396" y="456.4" width="14" height="3" fill="#c678dd" fill-opacity="0.48"/><rect x="2396" y="460.4" width="4" height="3" fill="#c678dd" fill-opacity="0.48"/><rect x="2402" y="460.4" width="2" height="3" fill="#e06c75" fill-opacity="0.48"/><rect x="2406" y="460.4" width="8" height="3" fill="#c678dd" fill-opacity="0.48"/><rect x="2404" y="464.4" width="8" height="3" fill="#e06c75" fill-opacity="0.48"/><rect x="2414" y="464.4" width="22" height="3" fill="#61afef" fill-opacity="0.48"/><rect x="2436" y="464.4" width="2" height="3" fill="#abb2bf" fill-opacity="0.3"/><rect x="2438" y="464.4" width="24" height="3" fill="#98c379" fill-opacity="0.48"/><rect x="2462" y="464.4" width="2" height="3" fill="#abb2bf" fill-opacity="0.3"/><rect x="2396" y="468.4" width="10" height="3" fill="#c678dd" fill-opacity="0.48"/><rect x="2388" y="472.4" width="22" height="3" fill="#c678dd" fill-opacity="0.48"/><rect x="2388" y="480.4" width="14" height="3" fill="#c678dd" fill-opacity="0.48"/><rect x="2404" y="480.4" width="16" height="3" fill="#c678dd" fill-opacity="0.48"/><rect x="2422" y="480.4" width="8" height="3" fill="#61afef" fill-opacity="0.48"/><rect x="2432" y="480.4" width="10" height="3" fill="#c678dd" fill-opacity="0.48"/><rect x="2444" y="480.4" width="14" height="3" fill="#c678dd" fill-opacity="0.48"/><rect x="2460" y="480.4" width="14" height="3" fill="#c678dd" fill-opacity="0.48"/><rect x="2476" y="480.4" width="14" height="3" fill="#c678dd" fill-opacity="0.48"/><rect x="2396" y="484.4" width="6" height="3" fill="#c678dd" fill-opacity="0.48"/><rect x="2404" y="484.4" width="12" height="3" fill="#e06c75" fill-opacity="0.48"/><rect x="2418" y="484.4" width="2" height="3" fill="#abb2bf" fill-opacity="0.3"/><rect x="2422" y="484.4" width="46" height="3" fill="#e06c75" fill-opacity="0.48"/><rect x="2396" y="488.4" width="6" height="3" fill="#c678dd" fill-opacity="0.48"/><rect x="2404" y="488.4" width="8" height="3" fill="#e06c75" fill-opacity="0.48"/><rect x="2414" y="488.4" width="2" height="3" fill="#abb2bf" fill-opacity="0.3"/><rect x="2418" y="488.4" width="22" height="3" fill="#e06c75" fill-opacity="0.48"/><rect x="2440" y="488.4" width="2" height="3" fill="#abb2bf" fill-opacity="0.3"/><rect x="2442" y="488.4" width="12" height="3" fill="#e06c75" fill-opacity="0.48"/><rect x="2454" y="488.4" width="2" height="3" fill="#abb2bf" fill-opacity="0.3"/><rect x="2396" y="492.4" width="6" height="3" fill="#c678dd" fill-opacity="0.48"/><rect x="2404" y="492.4" width="8" height="3" fill="#e06c75" fill-opacity="0.48"/><rect x="2414" y="492.4" width="2" height="3" fill="#abb2bf" fill-opacity="0.3"/><rect x="2418" y="492.4" width="22" height="3" fill="#e06c75" fill-opacity="0.48"/><rect x="2440" y="492.4" width="2" height="3" fill="#abb2bf" fill-opacity="0.3"/><rect x="2442" y="492.4" width="12" height="3" fill="#e06c75" fill-opacity="0.48"/><rect x="2454" y="492.4" width="2" height="3" fill="#abb2bf" fill-opacity="0.3"/><rect x="2396" y="496.4" width="6" height="3" fill="#c678dd" fill-opacity="0.48"/><rect x="2404" y="496.4" width="8" height="3" fill="#e06c75" fill-opacity="0.48"/><rect x="2414" y="496.4" width="2" height="3" fill="#abb2bf" fill-opacity="0.3"/><rect x="2418" y="496.4" width="22" height="3" fill="#e06c75" fill-opacity="0.48"/><rect x="2440" y="496.4" width="2" height="3" fill="#abb2bf" fill-opacity="0.3"/><rect x="2442" y="496.4" width="12" height="3" fill="#e06c75" fill-opacity="0.48"/><rect x="2454" y="496.4" width="2" height="3" fill="#abb2bf" fill-opacity="0.3"/><rect x="2396" y="500.4" width="6" height="3" fill="#c678dd" fill-opacity="0.48"/><rect x="2404" y="500.4" width="8" height="3" fill="#e06c75" fill-opacity="0.48"/><rect x="2414" y="500.4" width="2" height="3" fill="#abb2bf" fill-opacity="0.3"/><rect x="2418" y="500.4" width="22" height="3" fill="#e06c75" fill-opacity="0.48"/><rect x="2440" y="500.4" width="2" height="3" fill="#abb2bf" fill-opacity="0.3"/><rect x="2442" y="500.4" width="12" height="3" fill="#e06c75" fill-opacity="0.48"/><rect x="2454" y="500.4" width="2" height="3" fill="#abb2bf" fill-opacity="0.3"/><rect x="2396" y="504.4" width="6" height="3" fill="#c678dd" fill-opacity="0.48"/><rect x="2404" y="504.4" width="12" height="3" fill="#e06c75" fill-opacity="0.48"/><rect x="2418" y="504.4" width="2" height="3" fill="#abb2bf" fill-opacity="0.3"/><rect x="2422" y="504.4" width="8" height="3" fill="#e06c75" fill-opacity="0.48"/><rect x="2396" y="508.4" width="6" height="3" fill="#c678dd" fill-opacity="0.48"/><rect x="2404" y="508.4" width="12" height="3" fill="#e06c75" fill-opacity="0.48"/><rect x="2418" y="508.4" width="2" height="3" fill="#abb2bf" fill-opacity="0.3"/><rect x="2422" y="508.4" width="8" height="3" fill="#e06c75" fill-opacity="0.48"/><rect x="2396" y="516.4" width="8" height="3" fill="#e06c75" fill-opacity="0.48"/><rect x="2406" y="516.4" width="22" height="3" fill="#61afef" fill-opacity="0.48"/><rect x="2428" y="516.4" width="2" height="3" fill="#abb2bf" fill-opacity="0.3"/><rect x="2430" y="516.4" width="24" height="3" fill="#98c379" fill-opacity="0.48"/><rect x="2454" y="516.4" width="2" height="3" fill="#abb2bf" fill-opacity="0.3"/><rect x="2388" y="520.4" width="22" height="3" fill="#c678dd" fill-opacity="0.48"/><rect x="2380" y="524.4" width="20" height="3" fill="#c678dd" fill-opacity="0.48"/></svg><div class="a" style="left:2464px;top:184px;width:28px;height:1320px;background:#23272e;border-left:1.5px solid #363a42;border-top:1.5px solid #363a42"></div><div class="a" style="left:2465px;top:315.6px;width:27px;height:466.0px;background:#393e48;"></div><div class="a" style="left:2465px;top:321px;width:27px;height:5px;background:#4d78cc;"></div><div class="a" style="left:0px;top:1504px;width:68px;height:44px;background:#587cc9;"></div><svg style="left:18px;top:1508px" width="30" height="34" viewBox="0 0 30 34"><path d="M7.8 13.5 L15.8 21 L7.8 28.6 M24.2 6 L16.2 13.5 L24.2 20.8" stroke="#fff" stroke-width="2.1" fill="none"/></svg><svg style="left:80px;top:1508px" width="30" height="38" viewBox="0 0 30 38"><g fill="none" stroke="#a6adbb" stroke-width="2.2"><circle cx="9" cy="6.5" r="3.6"/><circle cx="9" cy="29.5" r="3.6"/><circle cx="22" cy="14.5" r="3.6"/><path d="M9 10 V26"/><path d="M22 18 Q22 22 14 23 Q9 24 9 26"/></g></svg><div class="t" style="left:116.00px;top:1513.68px;font-size:24px;color:#a6adbb;font-family:'Liberation Sans',sans-serif;letter-spacing:0.5px">master*</div><svg style="left:214px;top:1512px" width="32" height="28" viewBox="0 0 32 28"><g fill="none" stroke="#a6adbb" stroke-width="2.2"><path d="M4.5 13 A11 11 0 0 1 24.5 8"/><path d="M26 15 A11 11 0 0 1 6 20"/><path d="M24.8 2.5 V8.6 H18.6"/><path d="M5.6 25.6 V19.4 H11.8"/></g></svg><svg style="left:272px;top:1512px" width="28" height="28" viewBox="0 0 28 28"><g fill="none" stroke="#a6adbb" stroke-width="2.1"><circle cx="14" cy="14" r="11.6"/><path d="M9.6 9.6 L18.4 18.4 M18.4 9.6 L9.6 18.4"/></g></svg><div class="t" style="left:308.00px;top:1513.68px;font-size:24px;color:#a6adbb;font-family:'Liberation Sans',sans-serif;">0</div><svg style="left:329px;top:1511px" width="30" height="28" viewBox="0 0 30 28"><g fill="none" stroke="#a6adbb" stroke-width="2.1" stroke-linejoin="round"><path d="M14 3 L26 24.5 H2.5 Z"/></g><path d="M14 10 V18" stroke="#a6adbb" stroke-width="2.4"/><circle cx="14" cy="21" r="1.3" fill="#a6adbb"/></svg><div class="t" style="left:364.00px;top:1513.68px;font-size:24px;color:#a6adbb;font-family:'Liberation Sans',sans-serif;">0</div><svg style="left:1538px;top:1509px" width="26" height="36" viewBox="0 0 26 36"><g fill="none" stroke="#a6adbb" stroke-width="2.1"><circle cx="13.5" cy="17.5" r="5.5"/><path d="M13.5 2 V12 M13.5 23 V33"/></g></svg><div class="t" style="left:1573.00px;top:1513.68px;font-size:24px;color:#a6adbb;font-family:'Liberation Sans',sans-serif;letter-spacing:0.45px">Illia (4 days ago)</div><div class="t" style="left:1791.00px;top:1513.68px;font-size:24px;color:#a6adbb;font-family:'Liberation Sans',sans-serif;letter-spacing:0.6px">Ln 12, Col 23</div><div class="t" style="left:1976.50px;top:1513.68px;font-size:24px;color:#a6adbb;font-family:'Liberation Sans',sans-serif;letter-spacing:0.5px">Tab Size: 4</div><div class="t" style="left:2132.00px;top:1513.68px;font-size:24px;color:#a6adbb;font-family:'Liberation Sans',sans-serif;letter-spacing:0.5px">UTF-8</div><div class="t" style="left:2237.00px;top:1513.68px;font-size:24px;color:#a6adbb;font-family:'Liberation Sans',sans-serif;letter-spacing:0.5px">LF</div><div class="t" style="left:2294.00px;top:1511.68px;font-size:24px;color:#a6adbb;font-family:'Liberation Sans',sans-serif;letter-spacing:-1px">{ }</div><div class="t" style="left:2332.00px;top:1513.68px;font-size:24px;color:#a6adbb;font-family:'Liberation Sans',sans-serif;letter-spacing:-0.5px">VJASS</div><svg style="left:2434px;top:1510px" width="28" height="32" viewBox="0 0 28 32"><g fill="none" stroke="#a6adbb" stroke-width="2.1" stroke-linejoin="round"><path d="M4.2 23.6 H23.8 L21.3 19.6 V12.6 A7.3 8.2 0 0 0 6.7 12.6 V19.6 Z"/><path d="M11.2 24.4 A2.8 2.8 0 0 0 16.8 24.4"/></g></svg></div><div id="winborder"></div>
</body></html>
